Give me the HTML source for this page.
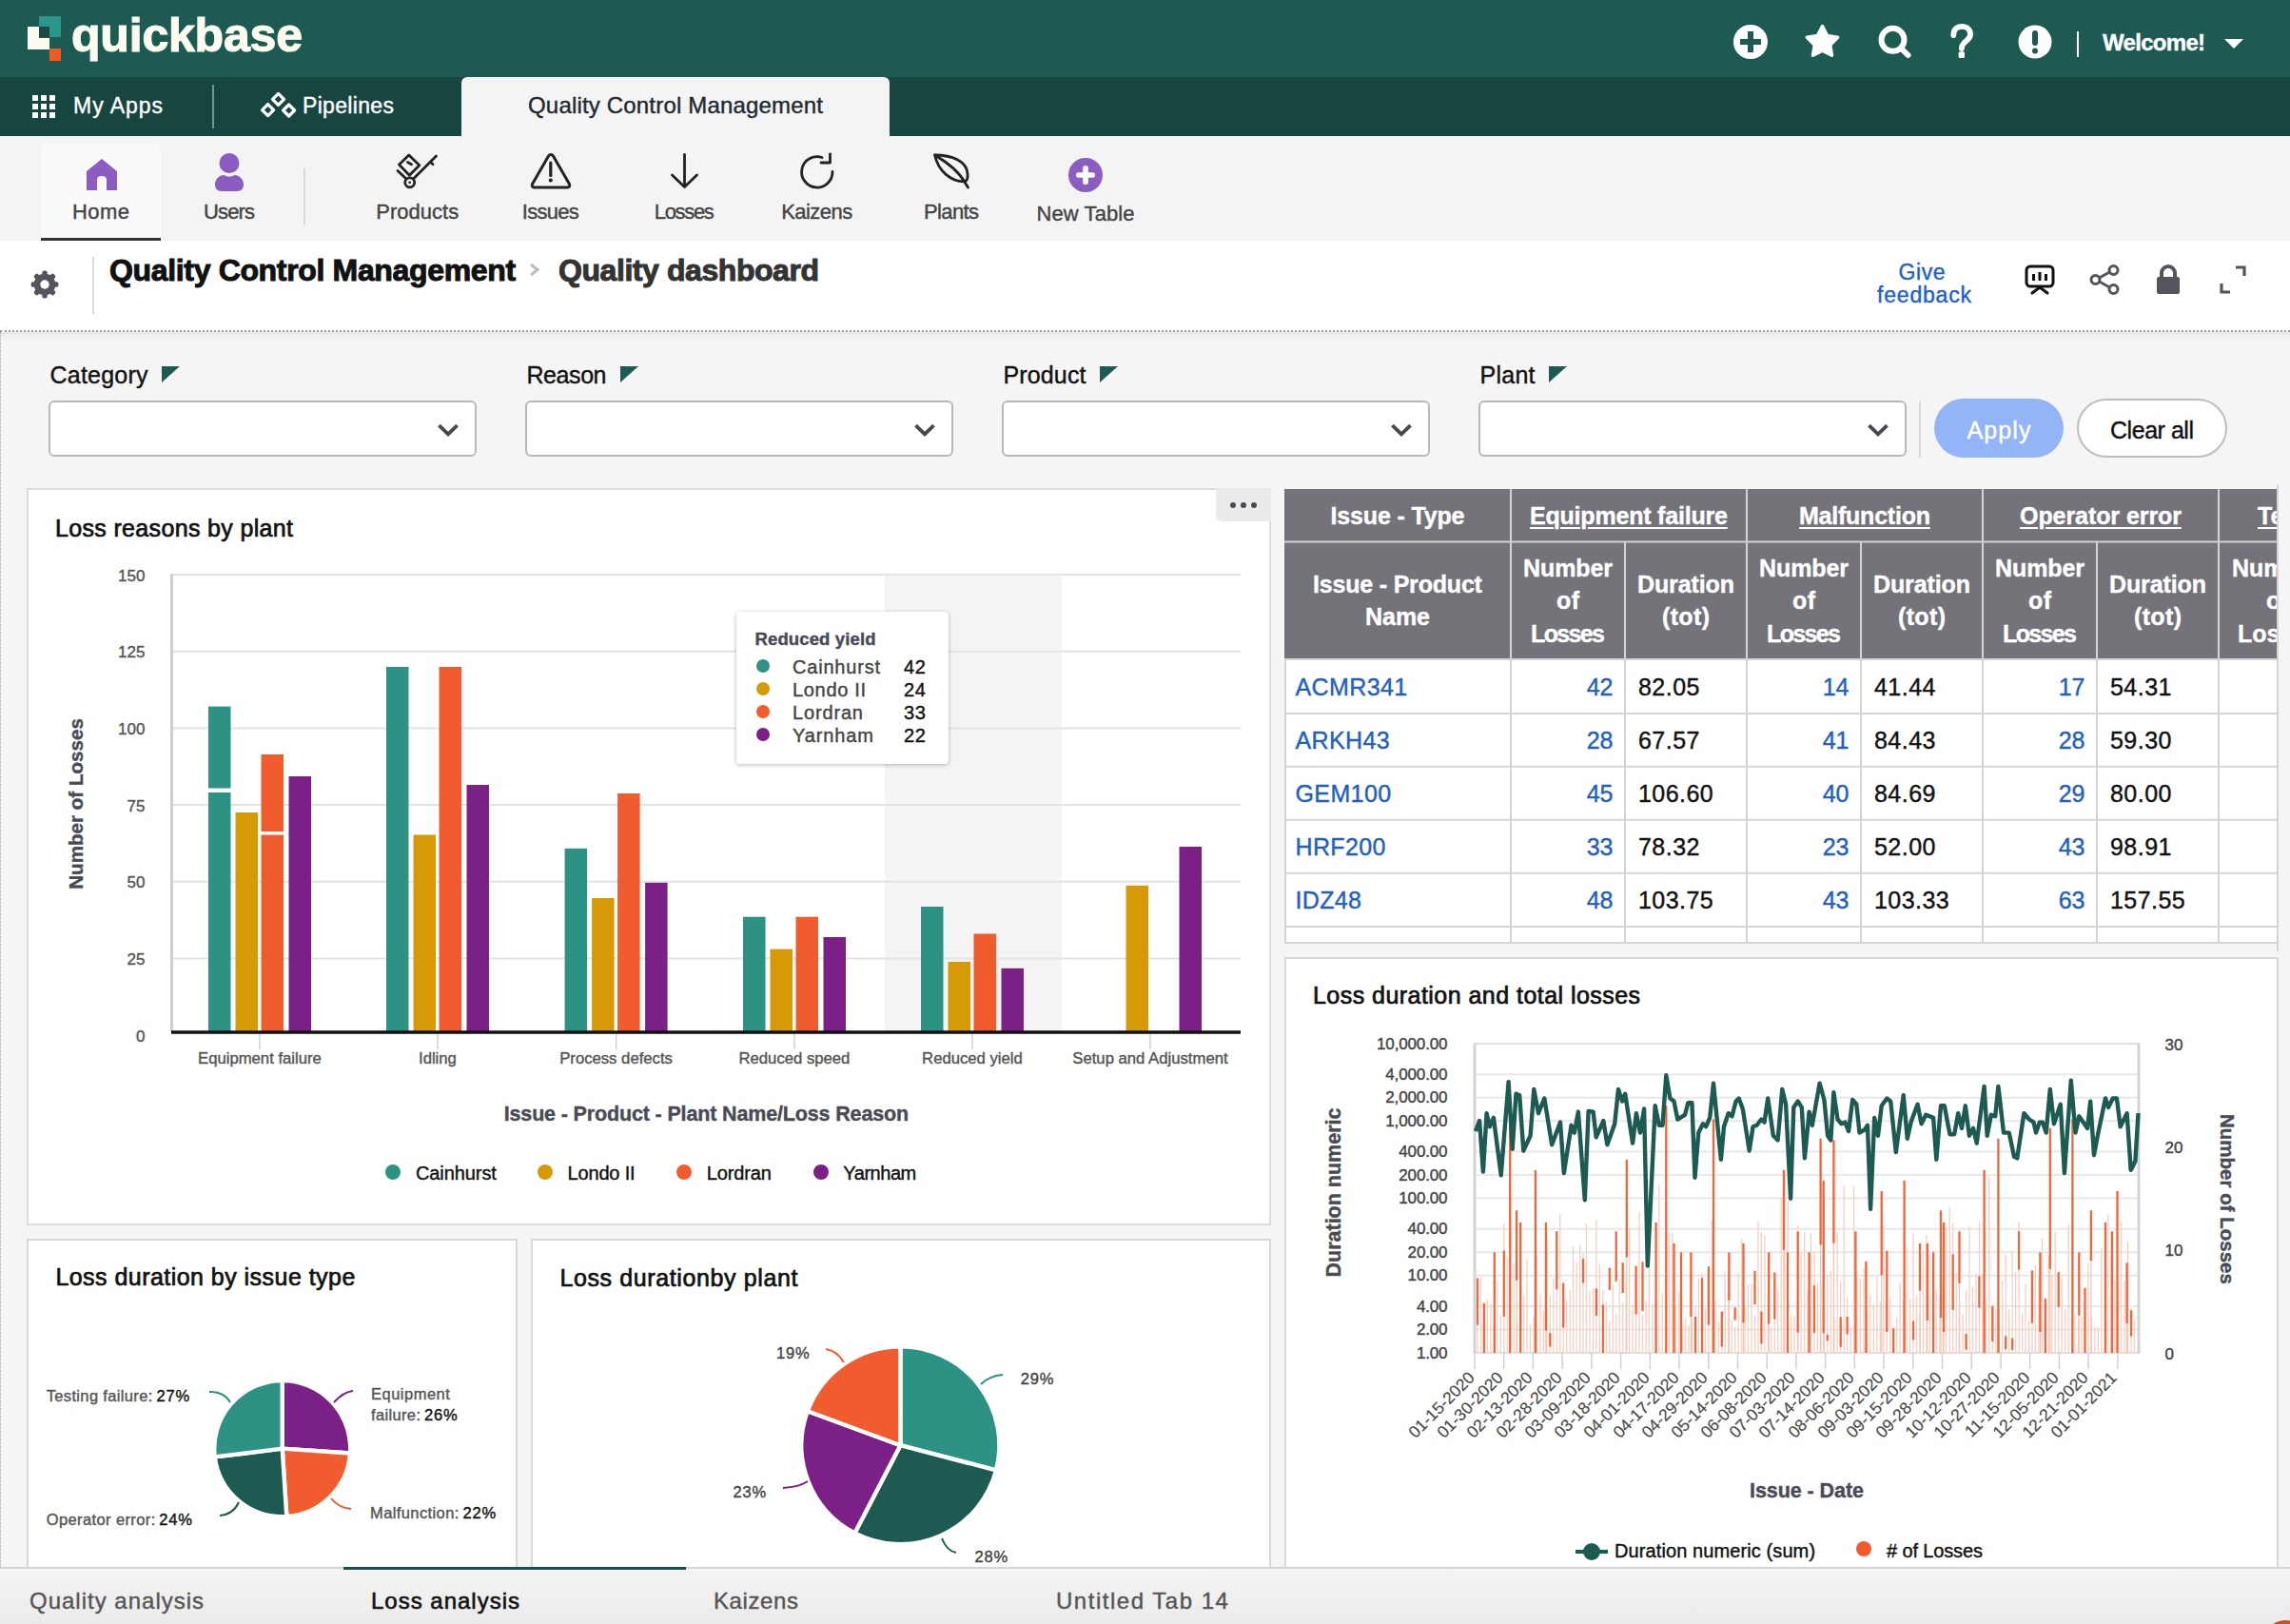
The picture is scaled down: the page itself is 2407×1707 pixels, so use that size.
<!DOCTYPE html>
<html><head><meta charset="utf-8"><title>Quickbase - Quality dashboard</title>
<style>
html,body{margin:0;padding:0;}
body{width:2407px;height:1707px;overflow:hidden;position:relative;background:#f4f4f4;font-family:"Liberation Sans",sans-serif;}
.t{position:absolute;white-space:nowrap;-webkit-text-stroke:0.4px;}
.r{position:absolute;}
svg.r{overflow:visible;}
</style></head><body>
<div class="r" style="left:0px;top:0px;width:2407px;height:81px;background:#1d5a51;"></div>
<div class="r" style="left:41px;top:17px;width:23px;height:22px;background:#2b968a;"></div>
<div class="r" style="left:41px;top:28px;width:11px;height:11px;background:#1b4a44;"></div>
<div class="r" style="left:29px;top:28px;width:12px;height:24px;background:#fbfbf0;"></div>
<div class="r" style="left:29px;top:40px;width:23px;height:12px;background:#fbfbf0;"></div>
<div class="r" style="left:52px;top:51px;width:12px;height:13px;background:#f05a24;"></div>
<div class="t" style="left:75.0px;top:11.7px;font-size:50px;line-height:50px;color:#fbfbf0;font-weight:bold;letter-spacing:-0.20px;-webkit-text-stroke:1.2px;">quickbase</div>
<svg class="r" style="left:1820px;top:24px" width="40" height="40" viewBox="0 0 40 40"><circle cx="20" cy="20" r="18" fill="#fff"/><rect x="17" y="9" width="6" height="22" fill="#1d5a51"/><rect x="9" y="17" width="22" height="6" fill="#1d5a51"/></svg>
<svg class="r" style="left:0;top:0" width="2407" height="81" viewBox="0 0 2407 81"><polygon points="1915.50,27.50 1920.55,37.54 1931.67,39.25 1923.68,47.16 1925.49,58.25 1915.50,53.10 1905.51,58.25 1907.32,47.16 1899.33,39.25 1910.45,37.54" fill="#fff" stroke="#fff" stroke-width="3.5" stroke-linejoin="round"/><circle cx="1989.5" cy="41.8" r="12" fill="none" stroke="#fff" stroke-width="6"/><path d="M1998.5 51 L2005.5 58" stroke="#fff" stroke-width="6" stroke-linecap="round"/><path d="M2053.3 37 C2053.3 31 2057 27.8 2062 27.8 C2067.5 27.8 2071 31.5 2071 36 C2071 41 2067 42.5 2064.5 45 C2063 46.5 2062 47.5 2061.8 51" fill="none" stroke="#fff" stroke-width="5.8" stroke-linecap="round"/><rect x="2058.6" y="54.3" width="6.4" height="6.8" rx="1.5" fill="#fff"/></svg>
<svg class="r" style="left:2120px;top:25px" width="38" height="38" viewBox="0 0 38 38"><circle cx="19" cy="19" r="17.5" fill="#fff"/><rect x="16" y="7" width="6" height="16" rx="3" fill="#1d5a51"/><circle cx="19" cy="28.5" r="3" fill="#1d5a51"/></svg>
<div class="r" style="left:2183px;top:33px;width:2px;height:27px;background:#fff;"></div>
<div class="t" style="left:2210.0px;top:32.7px;font-size:24px;line-height:24px;color:#fff;font-weight:bold;letter-spacing:-0.70px;">Welcome!</div>
<svg class="r" style="left:2337px;top:40px" width="22" height="12" viewBox="0 0 22 12"><path d="M1 1 L21 1 L11 11 Z" fill="#fff"/></svg>
<div class="r" style="left:0px;top:81px;width:2407px;height:62px;background:#17453f;"></div>
<svg class="r" style="left:34px;top:100px" width="24" height="24" viewBox="0 0 24 24"><rect x="0" y="0" width="6" height="6" fill="#fff"/><rect x="9" y="0" width="6" height="6" fill="#fff"/><rect x="18" y="0" width="6" height="6" fill="#fff"/><rect x="0" y="9" width="6" height="6" fill="#fff"/><rect x="9" y="9" width="6" height="6" fill="#fff"/><rect x="18" y="9" width="6" height="6" fill="#fff"/><rect x="0" y="18" width="6" height="6" fill="#fff"/><rect x="9" y="18" width="6" height="6" fill="#fff"/><rect x="18" y="18" width="6" height="6" fill="#fff"/></svg>
<div class="t" style="left:77.0px;top:99.5px;font-size:23px;line-height:23px;color:#fff;letter-spacing:0.97px;">My Apps</div>
<div class="r" style="left:223px;top:89px;width:2px;height:46px;background:#6f9791;"></div>
<svg class="r" style="left:0;top:81px" width="400" height="62" viewBox="0 81 400 62"><g fill="none" stroke="#fff" stroke-width="3.3" stroke-linejoin="round"><path d="M292.5,98.4 L298.5,104.4 L292.5,110.4 L286.5,104.4 Z"/><path d="M281.6,109.6 L287.6,115.6 L281.6,121.6 L275.6,115.6 Z"/><path d="M303.6,110.0 L309.6,116.0 L303.6,122.0 L297.6,116.0 Z"/></g></svg>
<div class="t" style="left:318.0px;top:99.5px;font-size:23px;line-height:23px;color:#fff;letter-spacing:0.33px;">Pipelines</div>
<div class="r" style="left:485px;top:81px;width:450px;height:62px;background:#f4f4f4;border-radius:6px 6px 0 0;"></div>
<div class="t" style="left:555.0px;top:98.7px;font-size:24px;line-height:24px;color:#1f2a30;letter-spacing:0.18px;">Quality Control Management</div>
<div class="r" style="left:0px;top:143px;width:2407px;height:110px;background:#f4f4f4;"></div>
<div class="r" style="left:43px;top:151px;width:126px;height:100px;background:#fafafa;border-radius:8px 8px 0 0;"></div>
<div class="r" style="left:43px;top:250px;width:126px;height:2.5px;background:#333;"></div>
<svg class="r" style="left:89px;top:165px" width="36" height="36" viewBox="0 0 36 36"><path d="M18 2 L34 15 L34 35 L23 35 L23 24 Q23 20 18 20 Q13 20 13 24 L13 35 L2 35 L2 15 Z" fill="#8b5cc2"/></svg>
<svg class="r" style="left:223px;top:160px" width="36" height="42" viewBox="0 0 36 42"><circle cx="18" cy="11.5" r="10.5" fill="#8b5cc2"/><path d="M3 34 C3 27 9 24 12.5 24 Q18 27.5 23.5 24 C27 24 33 27 33 34 Q33 41 26 41 L10 41 Q3 41 3 34 Z" fill="#8b5cc2"/></svg>
<div class="t" style="left:76.0px;top:212.4px;font-size:22px;line-height:22px;color:#444;letter-spacing:0.44px;">Home</div>
<div class="t" style="left:214.0px;top:212.4px;font-size:22px;line-height:22px;color:#444;letter-spacing:-0.86px;">Users</div>
<div class="r" style="left:319px;top:177px;width:2px;height:60px;background:#d8d8d8;"></div>
<svg class="r" style="left:0;top:0" width="1200" height="260" viewBox="0 0 1200 260"><g fill="none" stroke="#222" stroke-width="2.8" stroke-linecap="round" stroke-linejoin="round">
<path d="M429.8,163 L440.8,173.8 L430.3,184.2 L419.5,173 Z"/><path d="M428.5,170.5 L432.5,172.8"/>
<path d="M418,179.5 L426.5,187.5"/><path d="M435,187.5 L458.5,164"/><path d="M452.5,170.3 L455,172.8"/>
<circle cx="430.7" cy="191.8" r="5"/>
<path d="M578.8,162.5 Q577.5,162.5 576.5,164 L559.5,193.5 Q558.5,196.8 561.5,197 L596.5,197 Q599.5,196.8 598.5,193.5 L581.5,164 Q580.5,162.5 578.8,162.5 Z" stroke-width="3"/>
<path d="M578.8,171 L578.8,184.5" stroke-width="3.2"/>
<path d="M719.5,162.5 L719.5,196.5 M706.5,184 L719.5,196.5 L732.5,184"/>
<path d="M875,180.5 A16.2,16.2 0 1 1 864,165.5"/><path d="M872.5,162 L872.5,171 L863,171"/>
<path d="M982.6,163 C1000,163 1016.5,169 1017,183 C1017.3,188 1016,190.5 1013.5,190.8 C1000,191 986,180 982.6,163 Z"/>
<path d="M982.6,163 C996,171 1007,179 1013.5,190.8 L1017.5,197"/>
</g><circle cx="430.7" cy="191.8" r="1.4" fill="#222"/><circle cx="578.8" cy="189.5" r="2.1" fill="#222"/></svg>
<svg class="r" style="left:1122px;top:165px" width="38" height="38" viewBox="0 0 38 38"><circle cx="19" cy="19" r="18" fill="#8b5cc2"/><rect x="16.2" y="9" width="5.6" height="20" rx="2.5" fill="#fff"/><rect x="9" y="16.2" width="20" height="5.6" rx="2.5" fill="#fff"/></svg>
<div class="t" style="left:395.2px;top:212.4px;font-size:22px;line-height:22px;color:#444;letter-spacing:0.03px;">Products</div>
<div class="t" style="left:548.8px;top:212.4px;font-size:22px;line-height:22px;color:#444;letter-spacing:-0.72px;">Issues</div>
<div class="t" style="left:687.8px;top:212.4px;font-size:22px;line-height:22px;color:#444;letter-spacing:-1.34px;">Losses</div>
<div class="t" style="left:821.2px;top:212.4px;font-size:22px;line-height:22px;color:#444;letter-spacing:-0.55px;">Kaizens</div>
<div class="t" style="left:971.0px;top:212.4px;font-size:22px;line-height:22px;color:#444;letter-spacing:-0.63px;">Plants</div>
<div class="t" style="left:1089.5px;top:214.4px;font-size:22px;line-height:22px;color:#444;letter-spacing:0.08px;">New Table</div>
<div class="r" style="left:0px;top:253px;width:2407px;height:94px;background:#fff;"></div>
<div class="r" style="left:0px;top:347px;width:2407px;height:3px;background:transparent;border-top:2px dotted #a0a0a0;"></div>
<svg class="r" style="left:32.4px;top:283.7px" width="30" height="30" viewBox="0 0 30 30"><g fill="#55545c"><circle cx="15" cy="15" r="11.3"/><rect x="12.3" y="0.6" width="5.4" height="7" rx="2" transform="rotate(0 15 15)"/><rect x="12.3" y="0.6" width="5.4" height="7" rx="2" transform="rotate(45 15 15)"/><rect x="12.3" y="0.6" width="5.4" height="7" rx="2" transform="rotate(90 15 15)"/><rect x="12.3" y="0.6" width="5.4" height="7" rx="2" transform="rotate(135 15 15)"/><rect x="12.3" y="0.6" width="5.4" height="7" rx="2" transform="rotate(180 15 15)"/><rect x="12.3" y="0.6" width="5.4" height="7" rx="2" transform="rotate(225 15 15)"/><rect x="12.3" y="0.6" width="5.4" height="7" rx="2" transform="rotate(270 15 15)"/><rect x="12.3" y="0.6" width="5.4" height="7" rx="2" transform="rotate(315 15 15)"/></g><circle cx="15" cy="15" r="4.7" fill="#fff"/></svg>
<div class="r" style="left:97px;top:270px;width:2px;height:60px;background:#dcdcdc;"></div>
<div class="t" style="left:115.0px;top:267.9px;font-size:32px;line-height:32px;color:#111;font-weight:bold;letter-spacing:-0.34px;-webkit-text-stroke:1px;">Quality Control Management</div>
<svg class="r" style="left:555px;top:276px" width="14" height="15" viewBox="0 0 14 15"><path d="M3 2 L10 7.5 L3 13" fill="none" stroke="#bcbcbc" stroke-width="3"/></svg>
<div class="t" style="left:587.0px;top:267.9px;font-size:32px;line-height:32px;color:#333;font-weight:bold;letter-spacing:-0.43px;-webkit-text-stroke:1px;">Quality dashboard</div>
<div class="t" style="left:1995.5px;top:275.0px;font-size:23px;line-height:23px;color:#1b5fd0;letter-spacing:0.57px;">Give</div>
<div class="t" style="left:1973.0px;top:299.0px;font-size:23px;line-height:23px;color:#1b5fd0;letter-spacing:0.81px;">feedback</div>
<svg class="r" style="left:2128px;top:278px" width="32" height="32" viewBox="0 0 32 32"><rect x="2" y="2" width="28" height="21" rx="4" fill="none" stroke="#111" stroke-width="3"/><rect x="8" y="10" width="3" height="7" fill="#111"/><rect x="14.5" y="8" width="3" height="9" fill="#111"/><rect x="21" y="10" width="3" height="7" fill="#111"/><path d="M8 30 L16 24 L24 30" fill="none" stroke="#111" stroke-width="3" stroke-linecap="round"/></svg>
<svg class="r" style="left:2196px;top:278px" width="32" height="32" viewBox="0 0 32 32"><g fill="none" stroke="#55545c" stroke-width="3"><circle cx="6.5" cy="16" r="4.5"/><circle cx="25.5" cy="6" r="4.5"/><circle cx="25.5" cy="26" r="4.5"/><path d="M10.5 14 L21.5 8 M10.5 18 L21.5 24"/></g></svg>
<svg class="r" style="left:2266px;top:278px" width="26" height="32" viewBox="0 0 26 32"><path d="M6 14 L6 9 A7 7 0 0 1 20 9 L20 14" fill="none" stroke="#55545c" stroke-width="4"/><rect x="1" y="13" width="24" height="18" rx="2" fill="#55545c"/></svg>
<svg class="r" style="left:2332px;top:278px" width="30" height="32" viewBox="0 0 30 32"><path d="M18 3 L27 3 L27 12 M3 20 L3 29 L12 29" fill="none" stroke="#55545c" stroke-width="3.2"/></svg>
<div class="r" style="left:0px;top:349px;width:2407px;height:1298px;background:#f5f5f5;box-shadow: inset 0 7px 7px -5px rgba(0,0,0,0.09);"></div>
<div class="r" style="left:0px;top:349px;width:3px;height:1358px;background:transparent;border-left:1.5px dotted #a8a8a8;"></div>
<div class="t" style="left:52.5px;top:381.8px;font-size:25px;line-height:25px;color:#111;letter-spacing:0.22px;">Category</div>
<svg class="r" style="left:170px;top:385px" width="19" height="17" viewBox="0 0 19 17"><path d="M0 0 L19 0 L0 17 Z" fill="#1d5a51"/></svg>
<div class="r" style="left:51px;top:421px;width:446px;height:55px;background:#fff;border:2px solid #b8b8b8;border-radius:6px;box-sizing:content-box;"></div>
<svg class="r" style="left:458.5px;top:444px" width="24" height="16" viewBox="0 0 24 16"><path d="M2.5 3.2 L12 12.3 L21.5 3.2" fill="none" stroke="#48474f" stroke-width="3.8"/></svg>
<div class="t" style="left:553.5px;top:381.8px;font-size:25px;line-height:25px;color:#111;letter-spacing:-0.43px;">Reason</div>
<svg class="r" style="left:652px;top:385px" width="19" height="17" viewBox="0 0 19 17"><path d="M0 0 L19 0 L0 17 Z" fill="#1d5a51"/></svg>
<div class="r" style="left:552px;top:421px;width:446px;height:55px;background:#fff;border:2px solid #b8b8b8;border-radius:6px;box-sizing:content-box;"></div>
<svg class="r" style="left:959.5px;top:444px" width="24" height="16" viewBox="0 0 24 16"><path d="M2.5 3.2 L12 12.3 L21.5 3.2" fill="none" stroke="#48474f" stroke-width="3.8"/></svg>
<div class="t" style="left:1054.5px;top:381.8px;font-size:25px;line-height:25px;color:#111;letter-spacing:0.14px;">Product</div>
<svg class="r" style="left:1156px;top:385px" width="19" height="17" viewBox="0 0 19 17"><path d="M0 0 L19 0 L0 17 Z" fill="#1d5a51"/></svg>
<div class="r" style="left:1053px;top:421px;width:446px;height:55px;background:#fff;border:2px solid #b8b8b8;border-radius:6px;box-sizing:content-box;"></div>
<svg class="r" style="left:1460.5px;top:444px" width="24" height="16" viewBox="0 0 24 16"><path d="M2.5 3.2 L12 12.3 L21.5 3.2" fill="none" stroke="#48474f" stroke-width="3.8"/></svg>
<div class="t" style="left:1555.5px;top:381.8px;font-size:25px;line-height:25px;color:#111;letter-spacing:0.25px;">Plant</div>
<svg class="r" style="left:1628px;top:385px" width="19" height="17" viewBox="0 0 19 17"><path d="M0 0 L19 0 L0 17 Z" fill="#1d5a51"/></svg>
<div class="r" style="left:1554px;top:421px;width:446px;height:55px;background:#fff;border:2px solid #b8b8b8;border-radius:6px;box-sizing:content-box;"></div>
<svg class="r" style="left:1961.5px;top:444px" width="24" height="16" viewBox="0 0 24 16"><path d="M2.5 3.2 L12 12.3 L21.5 3.2" fill="none" stroke="#48474f" stroke-width="3.8"/></svg>
<div class="r" style="left:2017px;top:422px;width:2px;height:59px;background:#d8d8d8;"></div>
<div class="r" style="left:2033px;top:419px;width:136px;height:62px;background:#93b5f7;border-radius:31px;"></div>
<div class="t" style="left:2067.5px;top:439.8px;font-size:25px;line-height:25px;color:#fff;letter-spacing:1.12px;">Apply</div>
<div class="r" style="left:2183px;top:419px;width:154px;height:58px;background:#fff;border:2px solid #bdbdbd;border-radius:31px;box-sizing:content-box;"></div>
<div class="t" style="left:2218.0px;top:439.8px;font-size:25px;line-height:25px;color:#111;letter-spacing:-0.46px;">Clear all</div>
<div class="r" style="left:0px;top:1647px;width:2407px;height:60px;background:linear-gradient(#f4f4f4,#ebebeb);border-top:2px solid #d4d4d4;box-sizing:border-box;"></div>
<div class="r" style="left:361px;top:1647px;width:360px;height:2.5px;background:#1d4e48;"></div>
<div class="t" style="left:31.0px;top:1670.7px;font-size:24px;line-height:24px;color:#555;letter-spacing:1.00px;">Quality analysis</div>
<div class="t" style="left:390.0px;top:1670.7px;font-size:24px;line-height:24px;color:#111;letter-spacing:0.99px;-webkit-text-stroke:0.6px #111;">Loss analysis</div>
<div class="t" style="left:750.0px;top:1670.7px;font-size:24px;line-height:24px;color:#555;letter-spacing:0.60px;">Kaizens</div>
<div class="t" style="left:1110.0px;top:1670.7px;font-size:24px;line-height:24px;color:#555;letter-spacing:1.52px;">Untitled Tab 14</div>
<div class="r" style="left:2380px;top:1703px;width:44px;height:44px;border-radius:22px;background:#cf4f1a;"></div>
<div class="r" style="left:28px;top:513px;width:1308px;height:775px;background:#fff;border:2px solid #dcdcdc;box-sizing:border-box;"></div>
<div class="r" style="left:1277.5px;top:513px;width:58.5px;height:35px;background:#ebebeb;border-radius:0 0 0 6px;"></div>
<div class="r" style="left:1292.9px;top:527.8px;width:6.2px;height:6.2px;border-radius:4px;background:#4a4a52"></div>
<div class="r" style="left:1303.9px;top:527.8px;width:6.2px;height:6.2px;border-radius:4px;background:#4a4a52"></div>
<div class="r" style="left:1314.9px;top:527.8px;width:6.2px;height:6.2px;border-radius:4px;background:#4a4a52"></div>
<div class="t" style="left:58.0px;top:543.3px;font-size:25px;line-height:25px;color:#111;letter-spacing:0.34px;-webkit-text-stroke:0.7px;">Loss reasons by plant</div>
<svg class="r" style="left:0;top:0" width="1400" height="1300" viewBox="0 0 1400 1300"><rect x="930" y="605" width="186" height="479" fill="#f4f4f4"/><line x1="182" y1="1007.5" x2="1304" y2="1007.5" stroke="#e3e3e3" stroke-width="2"/><line x1="182" y1="926.8" x2="1304" y2="926.8" stroke="#e3e3e3" stroke-width="2"/><line x1="182" y1="846.1" x2="1304" y2="846.1" stroke="#e3e3e3" stroke-width="2"/><line x1="182" y1="765.4" x2="1304" y2="765.4" stroke="#e3e3e3" stroke-width="2"/><line x1="182" y1="684.7" x2="1304" y2="684.7" stroke="#e3e3e3" stroke-width="2"/><line x1="182" y1="604.0" x2="1304" y2="604.0" stroke="#e3e3e3" stroke-width="2"/><line x1="180.5" y1="603" x2="180.5" y2="1085" stroke="#cfcfcf" stroke-width="3"/><rect x="219.0" y="742.6" width="23.5" height="342.4" fill="#2c9283"/><rect x="247.5" y="854.0" width="23.5" height="231.0" fill="#d69a06"/><rect x="274.5" y="793.0" width="23.5" height="292.0" fill="#f15c2e"/><rect x="303.5" y="816.0" width="23.5" height="269.0" fill="#7a2087"/><rect x="406.0" y="701.0" width="23.5" height="384.0" fill="#2c9283"/><rect x="434.5" y="877.5" width="23.5" height="207.5" fill="#d69a06"/><rect x="461.5" y="701.0" width="23.5" height="384.0" fill="#f15c2e"/><rect x="490.5" y="825.0" width="23.5" height="260.0" fill="#7a2087"/><rect x="593.6" y="891.8" width="23.5" height="193.2" fill="#2c9283"/><rect x="622.1" y="944.0" width="23.5" height="141.0" fill="#d69a06"/><rect x="649.1" y="834.0" width="23.5" height="251.0" fill="#f15c2e"/><rect x="678.1" y="927.8" width="23.5" height="157.2" fill="#7a2087"/><rect x="781.0" y="963.7" width="23.5" height="121.3" fill="#2c9283"/><rect x="809.5" y="997.6" width="23.5" height="87.4" fill="#d69a06"/><rect x="836.5" y="963.7" width="23.5" height="121.3" fill="#f15c2e"/><rect x="865.5" y="985.0" width="23.5" height="100.0" fill="#7a2087"/><rect x="968.0" y="953.0" width="23.5" height="132.0" fill="#2c9283"/><rect x="996.5" y="1011.0" width="23.5" height="74.0" fill="#d69a06"/><rect x="1023.5" y="981.5" width="23.5" height="103.5" fill="#f15c2e"/><rect x="1052.5" y="1017.8" width="23.5" height="67.2" fill="#7a2087"/><rect x="1183.5" y="930.8" width="23.5" height="154.2" fill="#d69a06"/><rect x="1239.5" y="890.0" width="23.5" height="195.0" fill="#7a2087"/><rect x="218" y="828.5" width="26" height="4.5" fill="#fff"/><rect x="273.5" y="874" width="26" height="3.5" fill="#fff"/><line x1="180" y1="1085" x2="1304" y2="1085" stroke="#111" stroke-width="3.6"/><line x1="273" y1="1087" x2="273" y2="1103" stroke="#ccd0dd" stroke-width="1.5"/><line x1="460" y1="1087" x2="460" y2="1103" stroke="#ccd0dd" stroke-width="1.5"/><line x1="647.6" y1="1087" x2="647.6" y2="1103" stroke="#ccd0dd" stroke-width="1.5"/><line x1="835" y1="1087" x2="835" y2="1103" stroke="#ccd0dd" stroke-width="1.5"/><line x1="1022" y1="1087" x2="1022" y2="1103" stroke="#ccd0dd" stroke-width="1.5"/><line x1="1209" y1="1087" x2="1209" y2="1103" stroke="#ccd0dd" stroke-width="1.5"/></svg>
<div class="t" style="left:143.0px;top:1080.8px;font-size:17px;line-height:17px;color:#555;">0</div>
<div class="t" style="left:133.6px;top:1000.1px;font-size:17px;line-height:17px;color:#555;">25</div>
<div class="t" style="left:133.6px;top:919.4px;font-size:17px;line-height:17px;color:#555;">50</div>
<div class="t" style="left:133.6px;top:838.7px;font-size:17px;line-height:17px;color:#555;">75</div>
<div class="t" style="left:124.1px;top:758.0px;font-size:17px;line-height:17px;color:#555;">100</div>
<div class="t" style="left:124.1px;top:677.3px;font-size:17px;line-height:17px;color:#555;">125</div>
<div class="t" style="left:124.1px;top:596.6px;font-size:17px;line-height:17px;color:#555;">150</div>
<div class="t" style="left:208.0px;top:1104.9px;font-size:16.7px;line-height:16.7px;color:#555;">Equipment failure</div>
<div class="t" style="left:440.0px;top:1104.9px;font-size:16.7px;line-height:16.7px;color:#555;">Idling</div>
<div class="t" style="left:588.2px;top:1104.9px;font-size:16.7px;line-height:16.7px;color:#555;">Process defects</div>
<div class="t" style="left:776.5px;top:1104.9px;font-size:16.7px;line-height:16.7px;color:#555;">Reduced speed</div>
<div class="t" style="left:969.1px;top:1104.9px;font-size:16.7px;line-height:16.7px;color:#555;">Reduced yield</div>
<div class="t" style="left:1127.3px;top:1104.9px;font-size:16.7px;line-height:16.7px;color:#555;">Setup and Adjustment</div>
<div class="t" style="left:529.7px;top:1161.1px;font-size:21.5px;line-height:21.5px;color:#4a4a55;font-weight:bold;letter-spacing:-0.15px;">Issue - Product - Plant Name/Loss Reason</div>
<div class="t" style="left:-10.1px;top:833.5px;width:179.6px;height:22px;font-size:20.6px;line-height:22px;font-weight:bold;color:#4a4a55;text-align:center;transform:rotate(-90deg);transform-origin:50% 50%;">Number of Losses</div>
<div class="r" style="left:404.5px;top:1224px;width:16px;height:16px;border-radius:8px;background:#2c9283"></div>
<div class="t" style="left:436.9px;top:1223.1px;font-size:20px;line-height:20px;color:#111;letter-spacing:-0.07px;">Cainhurst</div>
<div class="r" style="left:564.8px;top:1224px;width:16px;height:16px;border-radius:8px;background:#d69a06"></div>
<div class="t" style="left:596.6px;top:1223.1px;font-size:20px;line-height:20px;color:#111;letter-spacing:-0.18px;">Londo II</div>
<div class="r" style="left:711px;top:1224px;width:16px;height:16px;border-radius:8px;background:#f15c2e"></div>
<div class="t" style="left:742.8px;top:1223.1px;font-size:20px;line-height:20px;color:#111;letter-spacing:-0.16px;">Lordran</div>
<div class="r" style="left:854.5px;top:1224px;width:16px;height:16px;border-radius:8px;background:#7a2087"></div>
<div class="t" style="left:886.3px;top:1223.1px;font-size:20px;line-height:20px;color:#111;letter-spacing:-0.45px;">Yarnham</div>
<div class="r" style="left:774px;top:643px;width:223px;height:160px;background:#fff;border-radius:4px;box-shadow:0 1px 4px rgba(0,0,0,0.28);"></div>
<div class="t" style="left:793.5px;top:663.3px;font-size:18.5px;line-height:18.5px;color:#4a4a55;font-weight:bold;letter-spacing:0.13px;">Reduced yield</div>
<div class="r" style="left:795px;top:693px;width:14px;height:14px;border-radius:7px;background:#2c9283"></div>
<div class="t" style="left:833.0px;top:690.6px;font-size:20px;line-height:20px;color:#444;letter-spacing:0.80px;">Cainhurst</div>
<div class="t" style="left:950.0px;top:690.6px;font-size:20px;line-height:20px;color:#111;letter-spacing:0.75px;">42</div>
<div class="r" style="left:795px;top:717px;width:14px;height:14px;border-radius:7px;background:#d69a06"></div>
<div class="t" style="left:833.0px;top:714.6px;font-size:20px;line-height:20px;color:#444;letter-spacing:0.67px;">Londo II</div>
<div class="t" style="left:950.0px;top:714.6px;font-size:20px;line-height:20px;color:#111;letter-spacing:0.75px;">24</div>
<div class="r" style="left:795px;top:741px;width:14px;height:14px;border-radius:7px;background:#f15c2e"></div>
<div class="t" style="left:833.0px;top:738.6px;font-size:20px;line-height:20px;color:#444;letter-spacing:0.84px;">Lordran</div>
<div class="t" style="left:950.0px;top:738.6px;font-size:20px;line-height:20px;color:#111;letter-spacing:0.75px;">33</div>
<div class="r" style="left:795px;top:765px;width:14px;height:14px;border-radius:7px;background:#7a2087"></div>
<div class="t" style="left:833.0px;top:762.6px;font-size:20px;line-height:20px;color:#444;letter-spacing:0.89px;">Yarnham</div>
<div class="t" style="left:950.0px;top:762.6px;font-size:20px;line-height:20px;color:#111;letter-spacing:0.75px;">22</div>
<div class="r" style="left:1350px;top:514px;width:1045px;height:478px;background:#fff;border:2px solid #d4d4d4;box-sizing:border-box;"></div>
<div class="r" style="left:1350px;top:514px;width:1043px;height:179px;background:#74737a;"></div>
<svg class="r" style="left:0;top:0" width="2407" height="1000" viewBox="0 0 2407 1000"><line x1="1350" y1="569.5" x2="2393" y2="569.5" stroke="#d2d2d8" stroke-width="2"/><line x1="1588" y1="514" x2="1588" y2="992" stroke="#d2d2d8" stroke-width="2"/><line x1="1836" y1="514" x2="1836" y2="992" stroke="#d2d2d8" stroke-width="2"/><line x1="2084" y1="514" x2="2084" y2="992" stroke="#d2d2d8" stroke-width="2"/><line x1="2332" y1="514" x2="2332" y2="992" stroke="#d2d2d8" stroke-width="2"/><line x1="1708" y1="569" x2="1708" y2="992" stroke="#d2d2d8" stroke-width="2"/><line x1="1956" y1="569" x2="1956" y2="992" stroke="#d2d2d8" stroke-width="2"/><line x1="2204" y1="569" x2="2204" y2="992" stroke="#d2d2d8" stroke-width="2"/><line x1="1350" y1="750" x2="2393" y2="750" stroke="#d4d4d4" stroke-width="2"/><line x1="1350" y1="805.7" x2="2393" y2="805.7" stroke="#d4d4d4" stroke-width="2"/><line x1="1350" y1="861.8" x2="2393" y2="861.8" stroke="#d4d4d4" stroke-width="2"/><line x1="1350" y1="917.8" x2="2393" y2="917.8" stroke="#d4d4d4" stroke-width="2"/><line x1="1350" y1="974" x2="2393" y2="974" stroke="#d4d4d4" stroke-width="2"/><line x1="1350" y1="693" x2="2393" y2="693" stroke="#d4d4d4" stroke-width="2"/></svg>
<div class="t" style="left:1398.5px;top:529.8px;font-size:25px;line-height:25px;color:#fff;font-weight:bold;letter-spacing:-0.15px;">Issue - Type</div>
<div class="t" style="left:1608.0px;top:529.8px;font-size:25px;line-height:25px;color:#fff;font-weight:bold;letter-spacing:-0.20px;text-decoration:underline;text-underline-offset:3px;text-decoration-thickness:2px;">Equipment failure</div>
<div class="t" style="left:1891.0px;top:529.8px;font-size:25px;line-height:25px;color:#fff;font-weight:bold;letter-spacing:-0.23px;text-decoration:underline;text-underline-offset:3px;text-decoration-thickness:2px;">Malfunction</div>
<div class="t" style="left:2123.0px;top:529.8px;font-size:25px;line-height:25px;color:#fff;font-weight:bold;letter-spacing:-0.07px;text-decoration:underline;text-underline-offset:3px;text-decoration-thickness:2px;">Operator error</div>
<div class="t" style="left:2373.0px;top:529.8px;font-size:25px;line-height:25px;color:#fff;font-weight:bold;text-decoration:underline;text-underline-offset:3px;text-decoration-thickness:2px;">Testing</div>
<div class="t" style="left:1380.0px;top:601.8px;font-size:25px;line-height:25px;color:#fff;font-weight:bold;letter-spacing:-0.19px;">Issue - Product</div>
<div class="t" style="left:1435.0px;top:635.8px;font-size:25px;line-height:25px;color:#fff;font-weight:bold;letter-spacing:-0.03px;">Name</div>
<div class="t" style="left:1601.0px;top:584.8px;font-size:25px;line-height:25px;color:#fff;font-weight:bold;letter-spacing:-0.09px;">Number</div>
<div class="t" style="left:1636.0px;top:618.8px;font-size:25px;line-height:25px;color:#fff;font-weight:bold;letter-spacing:0.40px;">of</div>
<div class="t" style="left:1609.0px;top:653.8px;font-size:25px;line-height:25px;color:#fff;font-weight:bold;letter-spacing:-1.63px;">Losses</div>
<div class="t" style="left:1849.0px;top:584.8px;font-size:25px;line-height:25px;color:#fff;font-weight:bold;letter-spacing:-0.09px;">Number</div>
<div class="t" style="left:1884.0px;top:618.8px;font-size:25px;line-height:25px;color:#fff;font-weight:bold;letter-spacing:0.40px;">of</div>
<div class="t" style="left:1857.0px;top:653.8px;font-size:25px;line-height:25px;color:#fff;font-weight:bold;letter-spacing:-1.63px;">Losses</div>
<div class="t" style="left:2097.0px;top:584.8px;font-size:25px;line-height:25px;color:#fff;font-weight:bold;letter-spacing:-0.09px;">Number</div>
<div class="t" style="left:2132.0px;top:618.8px;font-size:25px;line-height:25px;color:#fff;font-weight:bold;letter-spacing:0.40px;">of</div>
<div class="t" style="left:2105.0px;top:653.8px;font-size:25px;line-height:25px;color:#fff;font-weight:bold;letter-spacing:-1.63px;">Losses</div>
<div class="t" style="left:1721.0px;top:601.8px;font-size:25px;line-height:25px;color:#fff;font-weight:bold;letter-spacing:-0.11px;">Duration</div>
<div class="t" style="left:1747.0px;top:635.8px;font-size:25px;line-height:25px;color:#fff;font-weight:bold;letter-spacing:0.36px;">(tot)</div>
<div class="t" style="left:1969.0px;top:601.8px;font-size:25px;line-height:25px;color:#fff;font-weight:bold;letter-spacing:-0.11px;">Duration</div>
<div class="t" style="left:1995.0px;top:635.8px;font-size:25px;line-height:25px;color:#fff;font-weight:bold;letter-spacing:0.36px;">(tot)</div>
<div class="t" style="left:2217.0px;top:601.8px;font-size:25px;line-height:25px;color:#fff;font-weight:bold;letter-spacing:-0.11px;">Duration</div>
<div class="t" style="left:2243.0px;top:635.8px;font-size:25px;line-height:25px;color:#fff;font-weight:bold;letter-spacing:0.36px;">(tot)</div>
<div class="t" style="left:2346.0px;top:584.8px;font-size:25px;line-height:25px;color:#fff;font-weight:bold;">Number</div>
<div class="t" style="left:2382.0px;top:618.8px;font-size:25px;line-height:25px;color:#fff;font-weight:bold;">of</div>
<div class="t" style="left:2352.0px;top:653.8px;font-size:25px;line-height:25px;color:#fff;font-weight:bold;">Losses</div>
<div class="t" style="left:1361.5px;top:709.8px;font-size:25px;line-height:25px;color:#2160c0;letter-spacing:0.38px;">ACMR341</div>
<div class="t" style="left:1667.7px;top:709.8px;font-size:25px;line-height:25px;color:#2160c0;">42</div>
<div class="t" style="left:1722.0px;top:709.8px;font-size:25px;line-height:25px;color:#111;letter-spacing:0.47px;">82.05</div>
<div class="t" style="left:1915.7px;top:709.8px;font-size:25px;line-height:25px;color:#2160c0;">14</div>
<div class="t" style="left:1970.0px;top:709.8px;font-size:25px;line-height:25px;color:#111;letter-spacing:0.47px;">41.44</div>
<div class="t" style="left:2163.7px;top:709.8px;font-size:25px;line-height:25px;color:#2160c0;">17</div>
<div class="t" style="left:2218.0px;top:709.8px;font-size:25px;line-height:25px;color:#111;letter-spacing:0.47px;">54.31</div>
<div class="t" style="left:1361.5px;top:765.9px;font-size:25px;line-height:25px;color:#2160c0;letter-spacing:0.39px;">ARKH43</div>
<div class="t" style="left:1667.7px;top:765.9px;font-size:25px;line-height:25px;color:#2160c0;">28</div>
<div class="t" style="left:1722.0px;top:765.9px;font-size:25px;line-height:25px;color:#111;letter-spacing:0.47px;">67.57</div>
<div class="t" style="left:1915.7px;top:765.9px;font-size:25px;line-height:25px;color:#2160c0;">41</div>
<div class="t" style="left:1970.0px;top:765.9px;font-size:25px;line-height:25px;color:#111;letter-spacing:0.47px;">84.43</div>
<div class="t" style="left:2163.7px;top:765.9px;font-size:25px;line-height:25px;color:#2160c0;">28</div>
<div class="t" style="left:2218.0px;top:765.9px;font-size:25px;line-height:25px;color:#111;letter-spacing:0.47px;">59.30</div>
<div class="t" style="left:1361.5px;top:822.0px;font-size:25px;line-height:25px;color:#2160c0;letter-spacing:0.39px;">GEM100</div>
<div class="t" style="left:1667.7px;top:822.0px;font-size:25px;line-height:25px;color:#2160c0;">45</div>
<div class="t" style="left:1722.0px;top:822.0px;font-size:25px;line-height:25px;color:#111;letter-spacing:0.46px;">106.60</div>
<div class="t" style="left:1915.7px;top:822.0px;font-size:25px;line-height:25px;color:#2160c0;">40</div>
<div class="t" style="left:1970.0px;top:822.0px;font-size:25px;line-height:25px;color:#111;letter-spacing:0.47px;">84.69</div>
<div class="t" style="left:2163.7px;top:822.0px;font-size:25px;line-height:25px;color:#2160c0;">29</div>
<div class="t" style="left:2218.0px;top:822.0px;font-size:25px;line-height:25px;color:#111;letter-spacing:0.47px;">80.00</div>
<div class="t" style="left:1361.5px;top:878.1px;font-size:25px;line-height:25px;color:#2160c0;letter-spacing:0.37px;">HRF200</div>
<div class="t" style="left:1667.7px;top:878.1px;font-size:25px;line-height:25px;color:#2160c0;">33</div>
<div class="t" style="left:1722.0px;top:878.1px;font-size:25px;line-height:25px;color:#111;letter-spacing:0.47px;">78.32</div>
<div class="t" style="left:1915.7px;top:878.1px;font-size:25px;line-height:25px;color:#2160c0;">23</div>
<div class="t" style="left:1970.0px;top:878.1px;font-size:25px;line-height:25px;color:#111;letter-spacing:0.47px;">52.00</div>
<div class="t" style="left:2163.7px;top:878.1px;font-size:25px;line-height:25px;color:#2160c0;">43</div>
<div class="t" style="left:2218.0px;top:878.1px;font-size:25px;line-height:25px;color:#111;letter-spacing:0.47px;">98.91</div>
<div class="t" style="left:1361.5px;top:934.2px;font-size:25px;line-height:25px;color:#2160c0;letter-spacing:0.34px;">IDZ48</div>
<div class="t" style="left:1667.7px;top:934.2px;font-size:25px;line-height:25px;color:#2160c0;">48</div>
<div class="t" style="left:1722.0px;top:934.2px;font-size:25px;line-height:25px;color:#111;letter-spacing:0.46px;">103.75</div>
<div class="t" style="left:1915.7px;top:934.2px;font-size:25px;line-height:25px;color:#2160c0;">43</div>
<div class="t" style="left:1970.0px;top:934.2px;font-size:25px;line-height:25px;color:#111;letter-spacing:0.46px;">103.33</div>
<div class="t" style="left:2163.7px;top:934.2px;font-size:25px;line-height:25px;color:#2160c0;">63</div>
<div class="t" style="left:2218.0px;top:934.2px;font-size:25px;line-height:25px;color:#111;letter-spacing:0.46px;">157.55</div>
<div class="r" style="left:2393px;top:510px;width:14px;height:490px;background:#f5f5f5;border-left:2px solid #d4d4d4;box-sizing:border-box;"></div>
<div class="r" style="left:1350px;top:1006px;width:1045px;height:641px;background:#fff;border:2px solid #d8d8d8;border-bottom:none;box-sizing:border-box;"></div>
<div class="t" style="left:1380.0px;top:1034.3px;font-size:25px;line-height:25px;color:#111;letter-spacing:0.46px;-webkit-text-stroke:0.7px;">Loss duration and total losses</div>
<svg class="r" style="left:0;top:0" width="2407" height="1707" viewBox="0 0 2407 1707"><rect x="1550" y="1097" width="698" height="325" fill="#fff" stroke="#e0e0e0" stroke-width="2"/><line x1="1550" y1="1129.3" x2="2248" y2="1129.3" stroke="#e8e8e8" stroke-width="2"/><line x1="1550" y1="1153.8" x2="2248" y2="1153.8" stroke="#e8e8e8" stroke-width="2"/><line x1="1550" y1="1178.2" x2="2248" y2="1178.2" stroke="#e8e8e8" stroke-width="2"/><line x1="1550" y1="1210.6" x2="2248" y2="1210.6" stroke="#e8e8e8" stroke-width="2"/><line x1="1550" y1="1235.0" x2="2248" y2="1235.0" stroke="#e8e8e8" stroke-width="2"/><line x1="1550" y1="1259.5" x2="2248" y2="1259.5" stroke="#e8e8e8" stroke-width="2"/><line x1="1550" y1="1291.8" x2="2248" y2="1291.8" stroke="#e8e8e8" stroke-width="2"/><line x1="1550" y1="1316.3" x2="2248" y2="1316.3" stroke="#e8e8e8" stroke-width="2"/><line x1="1550" y1="1340.8" x2="2248" y2="1340.8" stroke="#e8e8e8" stroke-width="2"/><line x1="1550" y1="1373.1" x2="2248" y2="1373.1" stroke="#e8e8e8" stroke-width="2"/><line x1="1550" y1="1397.5" x2="2248" y2="1397.5" stroke="#e8e8e8" stroke-width="2"/><line x1="1550" y1="1097" x2="1550" y2="1422" stroke="#d4d4d4" stroke-width="3"/><line x1="2248" y1="1097" x2="2248" y2="1422" stroke="#d4d4d4" stroke-width="3"/><line x1="1553.0" y1="1386.9" x2="1553.0" y2="1422" stroke="#f7cdbd" stroke-width="1.2"/><line x1="1556.5" y1="1342.5" x2="1556.5" y2="1422" stroke="#f7cdbd" stroke-width="1.2"/><line x1="1559.9" y1="1374.1" x2="1559.9" y2="1422" stroke="#f7cdbd" stroke-width="1.2"/><line x1="1563.4" y1="1365.7" x2="1563.4" y2="1422" stroke="#f7cdbd" stroke-width="1.2"/><line x1="1566.9" y1="1370.1" x2="1566.9" y2="1422" stroke="#f7cdbd" stroke-width="1.2"/><line x1="1570.3" y1="1390.5" x2="1570.3" y2="1422" stroke="#f7cdbd" stroke-width="1.2"/><line x1="1573.8" y1="1346.7" x2="1573.8" y2="1422" stroke="#f7cdbd" stroke-width="1.2"/><line x1="1577.3" y1="1382.6" x2="1577.3" y2="1422" stroke="#f7cdbd" stroke-width="1.2"/><line x1="1580.8" y1="1285.6" x2="1580.8" y2="1422" stroke="#f7cdbd" stroke-width="1.2"/><line x1="1584.2" y1="1321.4" x2="1584.2" y2="1422" stroke="#f7cdbd" stroke-width="1.2"/><line x1="1587.7" y1="1279.7" x2="1587.7" y2="1422" stroke="#f7cdbd" stroke-width="1.2"/><line x1="1591.2" y1="1328.4" x2="1591.2" y2="1422" stroke="#f7cdbd" stroke-width="1.2"/><line x1="1594.6" y1="1388.9" x2="1594.6" y2="1422" stroke="#f7cdbd" stroke-width="1.2"/><line x1="1598.1" y1="1347.3" x2="1598.1" y2="1422" stroke="#f7cdbd" stroke-width="1.2"/><line x1="1601.6" y1="1361.3" x2="1601.6" y2="1422" stroke="#f7cdbd" stroke-width="1.2"/><line x1="1605.0" y1="1323.0" x2="1605.0" y2="1422" stroke="#f7cdbd" stroke-width="1.2"/><line x1="1608.5" y1="1392.2" x2="1608.5" y2="1422" stroke="#f7cdbd" stroke-width="1.2"/><line x1="1612.0" y1="1383.7" x2="1612.0" y2="1422" stroke="#f7cdbd" stroke-width="1.2"/><line x1="1615.5" y1="1319.4" x2="1615.5" y2="1422" stroke="#f7cdbd" stroke-width="1.2"/><line x1="1618.9" y1="1361.0" x2="1618.9" y2="1422" stroke="#f7cdbd" stroke-width="1.2"/><line x1="1622.4" y1="1378.1" x2="1622.4" y2="1422" stroke="#f7cdbd" stroke-width="1.2"/><line x1="1625.9" y1="1301.8" x2="1625.9" y2="1422" stroke="#f7cdbd" stroke-width="1.2"/><line x1="1629.3" y1="1361.7" x2="1629.3" y2="1422" stroke="#f7cdbd" stroke-width="1.2"/><line x1="1632.8" y1="1343.8" x2="1632.8" y2="1422" stroke="#f7cdbd" stroke-width="1.2"/><line x1="1636.3" y1="1328.5" x2="1636.3" y2="1422" stroke="#f7cdbd" stroke-width="1.2"/><line x1="1639.8" y1="1275.8" x2="1639.8" y2="1422" stroke="#f7cdbd" stroke-width="1.2"/><line x1="1643.2" y1="1350.8" x2="1643.2" y2="1422" stroke="#f7cdbd" stroke-width="1.2"/><line x1="1646.7" y1="1366.8" x2="1646.7" y2="1422" stroke="#f7cdbd" stroke-width="1.2"/><line x1="1650.2" y1="1356.1" x2="1650.2" y2="1422" stroke="#f7cdbd" stroke-width="1.2"/><line x1="1653.6" y1="1310.0" x2="1653.6" y2="1422" stroke="#f7cdbd" stroke-width="1.2"/><line x1="1657.1" y1="1326.8" x2="1657.1" y2="1422" stroke="#f7cdbd" stroke-width="1.2"/><line x1="1660.6" y1="1308.6" x2="1660.6" y2="1422" stroke="#f7cdbd" stroke-width="1.2"/><line x1="1664.0" y1="1317.5" x2="1664.0" y2="1422" stroke="#f7cdbd" stroke-width="1.2"/><line x1="1667.5" y1="1285.8" x2="1667.5" y2="1422" stroke="#f7cdbd" stroke-width="1.2"/><line x1="1671.0" y1="1356.4" x2="1671.0" y2="1422" stroke="#f7cdbd" stroke-width="1.2"/><line x1="1674.5" y1="1354.1" x2="1674.5" y2="1422" stroke="#f7cdbd" stroke-width="1.2"/><line x1="1677.9" y1="1282.7" x2="1677.9" y2="1422" stroke="#f7cdbd" stroke-width="1.2"/><line x1="1681.4" y1="1328.7" x2="1681.4" y2="1422" stroke="#f7cdbd" stroke-width="1.2"/><line x1="1684.9" y1="1356.1" x2="1684.9" y2="1422" stroke="#f7cdbd" stroke-width="1.2"/><line x1="1688.3" y1="1368.4" x2="1688.3" y2="1422" stroke="#f7cdbd" stroke-width="1.2"/><line x1="1691.8" y1="1389.0" x2="1691.8" y2="1422" stroke="#f7cdbd" stroke-width="1.2"/><line x1="1695.3" y1="1350.2" x2="1695.3" y2="1422" stroke="#f7cdbd" stroke-width="1.2"/><line x1="1698.7" y1="1381.2" x2="1698.7" y2="1422" stroke="#f7cdbd" stroke-width="1.2"/><line x1="1702.2" y1="1344.0" x2="1702.2" y2="1422" stroke="#f7cdbd" stroke-width="1.2"/><line x1="1705.7" y1="1369.2" x2="1705.7" y2="1422" stroke="#f7cdbd" stroke-width="1.2"/><line x1="1709.2" y1="1343.3" x2="1709.2" y2="1422" stroke="#f7cdbd" stroke-width="1.2"/><line x1="1712.6" y1="1291.0" x2="1712.6" y2="1422" stroke="#f7cdbd" stroke-width="1.2"/><line x1="1716.1" y1="1371.2" x2="1716.1" y2="1422" stroke="#f7cdbd" stroke-width="1.2"/><line x1="1719.6" y1="1343.3" x2="1719.6" y2="1422" stroke="#f7cdbd" stroke-width="1.2"/><line x1="1723.0" y1="1274.0" x2="1723.0" y2="1422" stroke="#f7cdbd" stroke-width="1.2"/><line x1="1726.5" y1="1382.1" x2="1726.5" y2="1422" stroke="#f7cdbd" stroke-width="1.2"/><line x1="1730.0" y1="1367.0" x2="1730.0" y2="1422" stroke="#f7cdbd" stroke-width="1.2"/><line x1="1733.4" y1="1330.1" x2="1733.4" y2="1422" stroke="#f7cdbd" stroke-width="1.2"/><line x1="1736.9" y1="1371.0" x2="1736.9" y2="1422" stroke="#f7cdbd" stroke-width="1.2"/><line x1="1740.4" y1="1362.2" x2="1740.4" y2="1422" stroke="#f7cdbd" stroke-width="1.2"/><line x1="1743.8" y1="1244.8" x2="1743.8" y2="1422" stroke="#f7cdbd" stroke-width="1.2"/><line x1="1747.3" y1="1359.1" x2="1747.3" y2="1422" stroke="#f7cdbd" stroke-width="1.2"/><line x1="1750.8" y1="1343.7" x2="1750.8" y2="1422" stroke="#f7cdbd" stroke-width="1.2"/><line x1="1754.3" y1="1296.5" x2="1754.3" y2="1422" stroke="#f7cdbd" stroke-width="1.2"/><line x1="1757.7" y1="1295.3" x2="1757.7" y2="1422" stroke="#f7cdbd" stroke-width="1.2"/><line x1="1761.2" y1="1372.2" x2="1761.2" y2="1422" stroke="#f7cdbd" stroke-width="1.2"/><line x1="1764.7" y1="1358.1" x2="1764.7" y2="1422" stroke="#f7cdbd" stroke-width="1.2"/><line x1="1768.1" y1="1391.9" x2="1768.1" y2="1422" stroke="#f7cdbd" stroke-width="1.2"/><line x1="1771.6" y1="1386.3" x2="1771.6" y2="1422" stroke="#f7cdbd" stroke-width="1.2"/><line x1="1775.1" y1="1392.8" x2="1775.1" y2="1422" stroke="#f7cdbd" stroke-width="1.2"/><line x1="1778.5" y1="1386.9" x2="1778.5" y2="1422" stroke="#f7cdbd" stroke-width="1.2"/><line x1="1782.0" y1="1374.3" x2="1782.0" y2="1422" stroke="#f7cdbd" stroke-width="1.2"/><line x1="1785.5" y1="1343.8" x2="1785.5" y2="1422" stroke="#f7cdbd" stroke-width="1.2"/><line x1="1789.0" y1="1337.5" x2="1789.0" y2="1422" stroke="#f7cdbd" stroke-width="1.2"/><line x1="1792.4" y1="1375.2" x2="1792.4" y2="1422" stroke="#f7cdbd" stroke-width="1.2"/><line x1="1795.9" y1="1388.6" x2="1795.9" y2="1422" stroke="#f7cdbd" stroke-width="1.2"/><line x1="1799.4" y1="1282.7" x2="1799.4" y2="1422" stroke="#f7cdbd" stroke-width="1.2"/><line x1="1802.8" y1="1367.1" x2="1802.8" y2="1422" stroke="#f7cdbd" stroke-width="1.2"/><line x1="1806.3" y1="1389.8" x2="1806.3" y2="1422" stroke="#f7cdbd" stroke-width="1.2"/><line x1="1809.8" y1="1380.2" x2="1809.8" y2="1422" stroke="#f7cdbd" stroke-width="1.2"/><line x1="1813.2" y1="1336.7" x2="1813.2" y2="1422" stroke="#f7cdbd" stroke-width="1.2"/><line x1="1816.7" y1="1339.3" x2="1816.7" y2="1422" stroke="#f7cdbd" stroke-width="1.2"/><line x1="1820.2" y1="1387.2" x2="1820.2" y2="1422" stroke="#f7cdbd" stroke-width="1.2"/><line x1="1823.7" y1="1394.3" x2="1823.7" y2="1422" stroke="#f7cdbd" stroke-width="1.2"/><line x1="1827.1" y1="1337.6" x2="1827.1" y2="1422" stroke="#f7cdbd" stroke-width="1.2"/><line x1="1830.6" y1="1302.0" x2="1830.6" y2="1422" stroke="#f7cdbd" stroke-width="1.2"/><line x1="1834.1" y1="1374.1" x2="1834.1" y2="1422" stroke="#f7cdbd" stroke-width="1.2"/><line x1="1837.5" y1="1349.9" x2="1837.5" y2="1422" stroke="#f7cdbd" stroke-width="1.2"/><line x1="1841.0" y1="1349.5" x2="1841.0" y2="1422" stroke="#f7cdbd" stroke-width="1.2"/><line x1="1844.5" y1="1382.6" x2="1844.5" y2="1422" stroke="#f7cdbd" stroke-width="1.2"/><line x1="1848.0" y1="1283.2" x2="1848.0" y2="1422" stroke="#f7cdbd" stroke-width="1.2"/><line x1="1851.4" y1="1294.8" x2="1851.4" y2="1422" stroke="#f7cdbd" stroke-width="1.2"/><line x1="1854.9" y1="1299.1" x2="1854.9" y2="1422" stroke="#f7cdbd" stroke-width="1.2"/><line x1="1858.4" y1="1365.1" x2="1858.4" y2="1422" stroke="#f7cdbd" stroke-width="1.2"/><line x1="1861.8" y1="1394.2" x2="1861.8" y2="1422" stroke="#f7cdbd" stroke-width="1.2"/><line x1="1865.3" y1="1379.3" x2="1865.3" y2="1422" stroke="#f7cdbd" stroke-width="1.2"/><line x1="1868.8" y1="1354.7" x2="1868.8" y2="1422" stroke="#f7cdbd" stroke-width="1.2"/><line x1="1872.2" y1="1258.0" x2="1872.2" y2="1422" stroke="#f7cdbd" stroke-width="1.2"/><line x1="1875.7" y1="1228.7" x2="1875.7" y2="1422" stroke="#f7cdbd" stroke-width="1.2"/><line x1="1879.2" y1="1262.5" x2="1879.2" y2="1422" stroke="#f7cdbd" stroke-width="1.2"/><line x1="1882.7" y1="1382.4" x2="1882.7" y2="1422" stroke="#f7cdbd" stroke-width="1.2"/><line x1="1886.1" y1="1383.8" x2="1886.1" y2="1422" stroke="#f7cdbd" stroke-width="1.2"/><line x1="1889.6" y1="1288.7" x2="1889.6" y2="1422" stroke="#f7cdbd" stroke-width="1.2"/><line x1="1893.1" y1="1316.0" x2="1893.1" y2="1422" stroke="#f7cdbd" stroke-width="1.2"/><line x1="1896.5" y1="1295.2" x2="1896.5" y2="1422" stroke="#f7cdbd" stroke-width="1.2"/><line x1="1900.0" y1="1356.6" x2="1900.0" y2="1422" stroke="#f7cdbd" stroke-width="1.2"/><line x1="1903.5" y1="1296.4" x2="1903.5" y2="1422" stroke="#f7cdbd" stroke-width="1.2"/><line x1="1906.9" y1="1316.1" x2="1906.9" y2="1422" stroke="#f7cdbd" stroke-width="1.2"/><line x1="1910.4" y1="1348.9" x2="1910.4" y2="1422" stroke="#f7cdbd" stroke-width="1.2"/><line x1="1913.9" y1="1348.2" x2="1913.9" y2="1422" stroke="#f7cdbd" stroke-width="1.2"/><line x1="1917.3" y1="1260.8" x2="1917.3" y2="1422" stroke="#f7cdbd" stroke-width="1.2"/><line x1="1920.8" y1="1339.5" x2="1920.8" y2="1422" stroke="#f7cdbd" stroke-width="1.2"/><line x1="1924.3" y1="1336.1" x2="1924.3" y2="1422" stroke="#f7cdbd" stroke-width="1.2"/><line x1="1927.8" y1="1386.9" x2="1927.8" y2="1422" stroke="#f7cdbd" stroke-width="1.2"/><line x1="1931.2" y1="1294.8" x2="1931.2" y2="1422" stroke="#f7cdbd" stroke-width="1.2"/><line x1="1934.7" y1="1346.7" x2="1934.7" y2="1422" stroke="#f7cdbd" stroke-width="1.2"/><line x1="1938.2" y1="1246.6" x2="1938.2" y2="1422" stroke="#f7cdbd" stroke-width="1.2"/><line x1="1941.6" y1="1363.2" x2="1941.6" y2="1422" stroke="#f7cdbd" stroke-width="1.2"/><line x1="1945.1" y1="1395.1" x2="1945.1" y2="1422" stroke="#f7cdbd" stroke-width="1.2"/><line x1="1948.6" y1="1247.0" x2="1948.6" y2="1422" stroke="#f7cdbd" stroke-width="1.2"/><line x1="1952.0" y1="1340.3" x2="1952.0" y2="1422" stroke="#f7cdbd" stroke-width="1.2"/><line x1="1955.5" y1="1344.0" x2="1955.5" y2="1422" stroke="#f7cdbd" stroke-width="1.2"/><line x1="1959.0" y1="1333.5" x2="1959.0" y2="1422" stroke="#f7cdbd" stroke-width="1.2"/><line x1="1962.5" y1="1378.5" x2="1962.5" y2="1422" stroke="#f7cdbd" stroke-width="1.2"/><line x1="1965.9" y1="1361.0" x2="1965.9" y2="1422" stroke="#f7cdbd" stroke-width="1.2"/><line x1="1969.4" y1="1371.0" x2="1969.4" y2="1422" stroke="#f7cdbd" stroke-width="1.2"/><line x1="1972.9" y1="1341.7" x2="1972.9" y2="1422" stroke="#f7cdbd" stroke-width="1.2"/><line x1="1976.3" y1="1368.6" x2="1976.3" y2="1422" stroke="#f7cdbd" stroke-width="1.2"/><line x1="1979.8" y1="1288.4" x2="1979.8" y2="1422" stroke="#f7cdbd" stroke-width="1.2"/><line x1="1983.3" y1="1341.3" x2="1983.3" y2="1422" stroke="#f7cdbd" stroke-width="1.2"/><line x1="1986.8" y1="1364.2" x2="1986.8" y2="1422" stroke="#f7cdbd" stroke-width="1.2"/><line x1="1990.2" y1="1394.8" x2="1990.2" y2="1422" stroke="#f7cdbd" stroke-width="1.2"/><line x1="1993.7" y1="1385.0" x2="1993.7" y2="1422" stroke="#f7cdbd" stroke-width="1.2"/><line x1="1997.2" y1="1348.3" x2="1997.2" y2="1422" stroke="#f7cdbd" stroke-width="1.2"/><line x1="2000.6" y1="1367.7" x2="2000.6" y2="1422" stroke="#f7cdbd" stroke-width="1.2"/><line x1="2004.1" y1="1311.0" x2="2004.1" y2="1422" stroke="#f7cdbd" stroke-width="1.2"/><line x1="2007.6" y1="1365.0" x2="2007.6" y2="1422" stroke="#f7cdbd" stroke-width="1.2"/><line x1="2011.0" y1="1296.2" x2="2011.0" y2="1422" stroke="#f7cdbd" stroke-width="1.2"/><line x1="2014.5" y1="1362.6" x2="2014.5" y2="1422" stroke="#f7cdbd" stroke-width="1.2"/><line x1="2018.0" y1="1379.4" x2="2018.0" y2="1422" stroke="#f7cdbd" stroke-width="1.2"/><line x1="2021.5" y1="1314.2" x2="2021.5" y2="1422" stroke="#f7cdbd" stroke-width="1.2"/><line x1="2024.9" y1="1297.8" x2="2024.9" y2="1422" stroke="#f7cdbd" stroke-width="1.2"/><line x1="2028.4" y1="1318.4" x2="2028.4" y2="1422" stroke="#f7cdbd" stroke-width="1.2"/><line x1="2031.9" y1="1314.3" x2="2031.9" y2="1422" stroke="#f7cdbd" stroke-width="1.2"/><line x1="2035.3" y1="1354.7" x2="2035.3" y2="1422" stroke="#f7cdbd" stroke-width="1.2"/><line x1="2038.8" y1="1364.2" x2="2038.8" y2="1422" stroke="#f7cdbd" stroke-width="1.2"/><line x1="2042.3" y1="1339.8" x2="2042.3" y2="1422" stroke="#f7cdbd" stroke-width="1.2"/><line x1="2045.7" y1="1290.2" x2="2045.7" y2="1422" stroke="#f7cdbd" stroke-width="1.2"/><line x1="2049.2" y1="1268.2" x2="2049.2" y2="1422" stroke="#f7cdbd" stroke-width="1.2"/><line x1="2052.7" y1="1285.9" x2="2052.7" y2="1422" stroke="#f7cdbd" stroke-width="1.2"/><line x1="2056.2" y1="1338.3" x2="2056.2" y2="1422" stroke="#f7cdbd" stroke-width="1.2"/><line x1="2059.6" y1="1369.6" x2="2059.6" y2="1422" stroke="#f7cdbd" stroke-width="1.2"/><line x1="2063.1" y1="1381.6" x2="2063.1" y2="1422" stroke="#f7cdbd" stroke-width="1.2"/><line x1="2066.6" y1="1356.0" x2="2066.6" y2="1422" stroke="#f7cdbd" stroke-width="1.2"/><line x1="2070.0" y1="1288.9" x2="2070.0" y2="1422" stroke="#f7cdbd" stroke-width="1.2"/><line x1="2073.5" y1="1353.3" x2="2073.5" y2="1422" stroke="#f7cdbd" stroke-width="1.2"/><line x1="2077.0" y1="1337.9" x2="2077.0" y2="1422" stroke="#f7cdbd" stroke-width="1.2"/><line x1="2080.4" y1="1284.3" x2="2080.4" y2="1422" stroke="#f7cdbd" stroke-width="1.2"/><line x1="2083.9" y1="1339.2" x2="2083.9" y2="1422" stroke="#f7cdbd" stroke-width="1.2"/><line x1="2087.4" y1="1366.9" x2="2087.4" y2="1422" stroke="#f7cdbd" stroke-width="1.2"/><line x1="2090.8" y1="1237.1" x2="2090.8" y2="1422" stroke="#f7cdbd" stroke-width="1.2"/><line x1="2094.3" y1="1370.2" x2="2094.3" y2="1422" stroke="#f7cdbd" stroke-width="1.2"/><line x1="2097.8" y1="1375.7" x2="2097.8" y2="1422" stroke="#f7cdbd" stroke-width="1.2"/><line x1="2101.3" y1="1377.0" x2="2101.3" y2="1422" stroke="#f7cdbd" stroke-width="1.2"/><line x1="2104.7" y1="1345.9" x2="2104.7" y2="1422" stroke="#f7cdbd" stroke-width="1.2"/><line x1="2108.2" y1="1318.6" x2="2108.2" y2="1422" stroke="#f7cdbd" stroke-width="1.2"/><line x1="2111.7" y1="1376.2" x2="2111.7" y2="1422" stroke="#f7cdbd" stroke-width="1.2"/><line x1="2115.1" y1="1313.9" x2="2115.1" y2="1422" stroke="#f7cdbd" stroke-width="1.2"/><line x1="2118.6" y1="1337.2" x2="2118.6" y2="1422" stroke="#f7cdbd" stroke-width="1.2"/><line x1="2122.1" y1="1284.0" x2="2122.1" y2="1422" stroke="#f7cdbd" stroke-width="1.2"/><line x1="2125.6" y1="1380.1" x2="2125.6" y2="1422" stroke="#f7cdbd" stroke-width="1.2"/><line x1="2129.0" y1="1349.5" x2="2129.0" y2="1422" stroke="#f7cdbd" stroke-width="1.2"/><line x1="2132.5" y1="1388.2" x2="2132.5" y2="1422" stroke="#f7cdbd" stroke-width="1.2"/><line x1="2136.0" y1="1341.6" x2="2136.0" y2="1422" stroke="#f7cdbd" stroke-width="1.2"/><line x1="2139.4" y1="1330.4" x2="2139.4" y2="1422" stroke="#f7cdbd" stroke-width="1.2"/><line x1="2142.9" y1="1341.2" x2="2142.9" y2="1422" stroke="#f7cdbd" stroke-width="1.2"/><line x1="2146.4" y1="1301.7" x2="2146.4" y2="1422" stroke="#f7cdbd" stroke-width="1.2"/><line x1="2149.8" y1="1392.5" x2="2149.8" y2="1422" stroke="#f7cdbd" stroke-width="1.2"/><line x1="2153.3" y1="1319.6" x2="2153.3" y2="1422" stroke="#f7cdbd" stroke-width="1.2"/><line x1="2156.8" y1="1340.0" x2="2156.8" y2="1422" stroke="#f7cdbd" stroke-width="1.2"/><line x1="2160.2" y1="1295.1" x2="2160.2" y2="1422" stroke="#f7cdbd" stroke-width="1.2"/><line x1="2163.7" y1="1344.9" x2="2163.7" y2="1422" stroke="#f7cdbd" stroke-width="1.2"/><line x1="2167.2" y1="1344.5" x2="2167.2" y2="1422" stroke="#f7cdbd" stroke-width="1.2"/><line x1="2170.7" y1="1375.7" x2="2170.7" y2="1422" stroke="#f7cdbd" stroke-width="1.2"/><line x1="2174.1" y1="1287.0" x2="2174.1" y2="1422" stroke="#f7cdbd" stroke-width="1.2"/><line x1="2177.6" y1="1388.2" x2="2177.6" y2="1422" stroke="#f7cdbd" stroke-width="1.2"/><line x1="2181.1" y1="1381.7" x2="2181.1" y2="1422" stroke="#f7cdbd" stroke-width="1.2"/><line x1="2184.5" y1="1386.3" x2="2184.5" y2="1422" stroke="#f7cdbd" stroke-width="1.2"/><line x1="2188.0" y1="1383.9" x2="2188.0" y2="1422" stroke="#f7cdbd" stroke-width="1.2"/><line x1="2191.5" y1="1377.8" x2="2191.5" y2="1422" stroke="#f7cdbd" stroke-width="1.2"/><line x1="2194.9" y1="1328.3" x2="2194.9" y2="1422" stroke="#f7cdbd" stroke-width="1.2"/><line x1="2198.4" y1="1385.3" x2="2198.4" y2="1422" stroke="#f7cdbd" stroke-width="1.2"/><line x1="2201.9" y1="1394.8" x2="2201.9" y2="1422" stroke="#f7cdbd" stroke-width="1.2"/><line x1="2205.4" y1="1395.0" x2="2205.4" y2="1422" stroke="#f7cdbd" stroke-width="1.2"/><line x1="2208.8" y1="1311.4" x2="2208.8" y2="1422" stroke="#f7cdbd" stroke-width="1.2"/><line x1="2212.3" y1="1367.6" x2="2212.3" y2="1422" stroke="#f7cdbd" stroke-width="1.2"/><line x1="2215.8" y1="1276.5" x2="2215.8" y2="1422" stroke="#f7cdbd" stroke-width="1.2"/><line x1="2219.2" y1="1319.1" x2="2219.2" y2="1422" stroke="#f7cdbd" stroke-width="1.2"/><line x1="2222.7" y1="1346.2" x2="2222.7" y2="1422" stroke="#f7cdbd" stroke-width="1.2"/><line x1="2226.2" y1="1365.7" x2="2226.2" y2="1422" stroke="#f7cdbd" stroke-width="1.2"/><line x1="2229.7" y1="1283.4" x2="2229.7" y2="1422" stroke="#f7cdbd" stroke-width="1.2"/><line x1="2233.1" y1="1346.3" x2="2233.1" y2="1422" stroke="#f7cdbd" stroke-width="1.2"/><line x1="2236.6" y1="1305.9" x2="2236.6" y2="1422" stroke="#f7cdbd" stroke-width="1.2"/><line x1="2240.1" y1="1375.2" x2="2240.1" y2="1422" stroke="#f7cdbd" stroke-width="1.2"/><line x1="2243.5" y1="1388.2" x2="2243.5" y2="1422" stroke="#f7cdbd" stroke-width="1.2"/><line x1="1587.2" y1="1179.6" x2="1587.2" y2="1422" stroke="#f5c4b0" stroke-width="1.3"/><line x1="1587.2" y1="1179.6" x2="1587.2" y2="1422.0" stroke="#f15c2e" stroke-width="2.3" opacity="0.92"/><line x1="1594.1" y1="1272.4" x2="1594.1" y2="1422" stroke="#f5c4b0" stroke-width="1.3"/><line x1="1594.1" y1="1272.4" x2="1594.1" y2="1345.8" stroke="#f15c2e" stroke-width="2.3" opacity="0.92"/><line x1="1598.2" y1="1285.0" x2="1598.2" y2="1422" stroke="#f5c4b0" stroke-width="1.3"/><line x1="1598.2" y1="1285.0" x2="1598.2" y2="1422.0" stroke="#f15c2e" stroke-width="2.3" opacity="0.92"/><line x1="1613.9" y1="1229.9" x2="1613.9" y2="1422" stroke="#f5c4b0" stroke-width="1.3"/><line x1="1613.9" y1="1229.9" x2="1613.9" y2="1422.0" stroke="#f15c2e" stroke-width="2.3" opacity="0.92"/><line x1="1624.9" y1="1285.0" x2="1624.9" y2="1422" stroke="#f5c4b0" stroke-width="1.3"/><line x1="1624.9" y1="1285.0" x2="1624.9" y2="1398.5" stroke="#f15c2e" stroke-width="2.3" opacity="0.92"/><line x1="1709.8" y1="1218.9" x2="1709.8" y2="1422" stroke="#f5c4b0" stroke-width="1.3"/><line x1="1709.8" y1="1218.9" x2="1709.8" y2="1321.5" stroke="#f15c2e" stroke-width="2.3" opacity="0.92"/><line x1="1751.3" y1="1162.3" x2="1751.3" y2="1422" stroke="#f5c4b0" stroke-width="1.3"/><line x1="1751.3" y1="1162.3" x2="1751.3" y2="1422.0" stroke="#f15c2e" stroke-width="2.3" opacity="0.92"/><line x1="1801.0" y1="1176.5" x2="1801.0" y2="1422" stroke="#f5c4b0" stroke-width="1.3"/><line x1="1801.0" y1="1176.5" x2="1801.0" y2="1422.0" stroke="#f15c2e" stroke-width="2.3" opacity="0.92"/><line x1="1874.9" y1="1229.9" x2="1874.9" y2="1422" stroke="#f5c4b0" stroke-width="1.3"/><line x1="1874.9" y1="1229.9" x2="1874.9" y2="1313.8" stroke="#f15c2e" stroke-width="2.3" opacity="0.92"/><line x1="1913.6" y1="1196.9" x2="1913.6" y2="1422" stroke="#f5c4b0" stroke-width="1.3"/><line x1="1913.6" y1="1196.9" x2="1913.6" y2="1308.3" stroke="#f15c2e" stroke-width="2.3" opacity="0.92"/><line x1="1916.7" y1="1240.9" x2="1916.7" y2="1422" stroke="#f5c4b0" stroke-width="1.3"/><line x1="1916.7" y1="1240.9" x2="1916.7" y2="1401.2" stroke="#f15c2e" stroke-width="2.3" opacity="0.92"/><line x1="1927.4" y1="1198.5" x2="1927.4" y2="1422" stroke="#f5c4b0" stroke-width="1.3"/><line x1="1927.4" y1="1198.5" x2="1927.4" y2="1306.8" stroke="#f15c2e" stroke-width="2.3" opacity="0.92"/><line x1="1977.7" y1="1251.9" x2="1977.7" y2="1422" stroke="#f5c4b0" stroke-width="1.3"/><line x1="1977.7" y1="1251.9" x2="1977.7" y2="1340.4" stroke="#f15c2e" stroke-width="2.3" opacity="0.92"/><line x1="2001.6" y1="1240.9" x2="2001.6" y2="1422" stroke="#f5c4b0" stroke-width="1.3"/><line x1="2001.6" y1="1240.9" x2="2001.6" y2="1422.0" stroke="#f15c2e" stroke-width="2.3" opacity="0.92"/><line x1="2085.6" y1="1229.9" x2="2085.6" y2="1422" stroke="#f5c4b0" stroke-width="1.3"/><line x1="2085.6" y1="1229.9" x2="2085.6" y2="1422.0" stroke="#f15c2e" stroke-width="2.3" opacity="0.92"/><line x1="2100.4" y1="1196.9" x2="2100.4" y2="1422" stroke="#f5c4b0" stroke-width="1.3"/><line x1="2100.4" y1="1196.9" x2="2100.4" y2="1422.0" stroke="#f15c2e" stroke-width="2.3" opacity="0.92"/><line x1="2154.8" y1="1185.9" x2="2154.8" y2="1422" stroke="#f5c4b0" stroke-width="1.3"/><line x1="2154.8" y1="1185.9" x2="2154.8" y2="1333.8" stroke="#f15c2e" stroke-width="2.3" opacity="0.92"/><line x1="2178.4" y1="1176.5" x2="2178.4" y2="1422" stroke="#f5c4b0" stroke-width="1.3"/><line x1="2178.4" y1="1176.5" x2="2178.4" y2="1422.0" stroke="#f15c2e" stroke-width="2.3" opacity="0.92"/><line x1="2197.9" y1="1272.4" x2="2197.9" y2="1422" stroke="#f5c4b0" stroke-width="1.3"/><line x1="2197.9" y1="1272.4" x2="2197.9" y2="1325.2" stroke="#f15c2e" stroke-width="2.3" opacity="0.92"/><line x1="2225.5" y1="1251.9" x2="2225.5" y2="1422" stroke="#f5c4b0" stroke-width="1.3"/><line x1="2225.5" y1="1251.9" x2="2225.5" y2="1422.0" stroke="#f15c2e" stroke-width="2.3" opacity="0.92"/><line x1="2213.0" y1="1285.0" x2="2213.0" y2="1422" stroke="#f5c4b0" stroke-width="1.3"/><line x1="2213.0" y1="1285.0" x2="2213.0" y2="1422.0" stroke="#f15c2e" stroke-width="2.3" opacity="0.92"/><line x1="2219.9" y1="1294.4" x2="2219.9" y2="1422" stroke="#f5c4b0" stroke-width="1.3"/><line x1="2219.9" y1="1294.4" x2="2219.9" y2="1422.0" stroke="#f15c2e" stroke-width="2.3" opacity="0.92"/><line x1="1570.8" y1="1316.4" x2="1570.8" y2="1422" stroke="#f5c4b0" stroke-width="1.3"/><line x1="1570.8" y1="1316.4" x2="1570.8" y2="1422.0" stroke="#f15c2e" stroke-width="2.3" opacity="0.92"/><line x1="1740.6" y1="1285.0" x2="1740.6" y2="1422" stroke="#f5c4b0" stroke-width="1.3"/><line x1="1740.6" y1="1285.0" x2="1740.6" y2="1422.0" stroke="#f15c2e" stroke-width="2.3" opacity="0.92"/><line x1="1759.5" y1="1307.0" x2="1759.5" y2="1422" stroke="#f5c4b0" stroke-width="1.3"/><line x1="1759.5" y1="1307.0" x2="1759.5" y2="1422.0" stroke="#f15c2e" stroke-width="2.3" opacity="0.92"/><line x1="1767.0" y1="1316.4" x2="1767.0" y2="1422" stroke="#f5c4b0" stroke-width="1.3"/><line x1="1767.0" y1="1316.4" x2="1767.0" y2="1422.0" stroke="#f15c2e" stroke-width="2.3" opacity="0.92"/><line x1="1777.4" y1="1316.4" x2="1777.4" y2="1422" stroke="#f5c4b0" stroke-width="1.3"/><line x1="1777.4" y1="1316.4" x2="1777.4" y2="1384.1" stroke="#f15c2e" stroke-width="2.3" opacity="0.92"/><line x1="1859.2" y1="1316.4" x2="1859.2" y2="1422" stroke="#f5c4b0" stroke-width="1.3"/><line x1="1859.2" y1="1316.4" x2="1859.2" y2="1391.6" stroke="#f15c2e" stroke-width="2.3" opacity="0.92"/><line x1="1889.7" y1="1294.4" x2="1889.7" y2="1422" stroke="#f5c4b0" stroke-width="1.3"/><line x1="1889.7" y1="1294.4" x2="1889.7" y2="1400.8" stroke="#f15c2e" stroke-width="2.3" opacity="0.92"/><line x1="1950.4" y1="1294.4" x2="1950.4" y2="1422" stroke="#f5c4b0" stroke-width="1.3"/><line x1="1950.4" y1="1294.4" x2="1950.4" y2="1422.0" stroke="#f15c2e" stroke-width="2.3" opacity="0.92"/><line x1="1961.4" y1="1325.8" x2="1961.4" y2="1422" stroke="#f5c4b0" stroke-width="1.3"/><line x1="1961.4" y1="1325.8" x2="1961.4" y2="1422.0" stroke="#f15c2e" stroke-width="2.3" opacity="0.92"/><line x1="2018.0" y1="1307.0" x2="2018.0" y2="1422" stroke="#f5c4b0" stroke-width="1.3"/><line x1="2018.0" y1="1307.0" x2="2018.0" y2="1356.7" stroke="#f15c2e" stroke-width="2.3" opacity="0.92"/><line x1="2025.8" y1="1307.0" x2="2025.8" y2="1422" stroke="#f5c4b0" stroke-width="1.3"/><line x1="2025.8" y1="1307.0" x2="2025.8" y2="1387.9" stroke="#f15c2e" stroke-width="2.3" opacity="0.92"/><line x1="2032.1" y1="1316.4" x2="2032.1" y2="1422" stroke="#f5c4b0" stroke-width="1.3"/><line x1="2032.1" y1="1316.4" x2="2032.1" y2="1422.0" stroke="#f15c2e" stroke-width="2.3" opacity="0.92"/><line x1="2043.1" y1="1285.0" x2="2043.1" y2="1422" stroke="#f5c4b0" stroke-width="1.3"/><line x1="2043.1" y1="1285.0" x2="2043.1" y2="1400.2" stroke="#f15c2e" stroke-width="2.3" opacity="0.92"/><line x1="2040.0" y1="1272.4" x2="2040.0" y2="1422" stroke="#f5c4b0" stroke-width="1.3"/><line x1="2040.0" y1="1272.4" x2="2040.0" y2="1385.1" stroke="#f15c2e" stroke-width="2.3" opacity="0.92"/><line x1="2059.5" y1="1294.4" x2="2059.5" y2="1422" stroke="#f5c4b0" stroke-width="1.3"/><line x1="2059.5" y1="1294.4" x2="2059.5" y2="1348.8" stroke="#f15c2e" stroke-width="2.3" opacity="0.92"/><line x1="2185.3" y1="1316.4" x2="2185.3" y2="1422" stroke="#f5c4b0" stroke-width="1.3"/><line x1="2185.3" y1="1316.4" x2="2185.3" y2="1382.7" stroke="#f15c2e" stroke-width="2.3" opacity="0.92"/><line x1="2144.4" y1="1316.4" x2="2144.4" y2="1422" stroke="#f5c4b0" stroke-width="1.3"/><line x1="2144.4" y1="1316.4" x2="2144.4" y2="1400.1" stroke="#f15c2e" stroke-width="2.3" opacity="0.92"/><line x1="2235.6" y1="1327.4" x2="2235.6" y2="1422" stroke="#f5c4b0" stroke-width="1.3"/><line x1="2235.6" y1="1327.4" x2="2235.6" y2="1390.9" stroke="#f15c2e" stroke-width="2.3" opacity="0.92"/><line x1="1832.5" y1="1307.0" x2="1832.5" y2="1422" stroke="#f5c4b0" stroke-width="1.3"/><line x1="1832.5" y1="1307.0" x2="1832.5" y2="1390.4" stroke="#f15c2e" stroke-width="2.3" opacity="0.92"/><line x1="1817.4" y1="1316.4" x2="1817.4" y2="1422" stroke="#f5c4b0" stroke-width="1.3"/><line x1="1817.4" y1="1316.4" x2="1817.4" y2="1366.7" stroke="#f15c2e" stroke-width="2.3" opacity="0.92"/><line x1="1879.0" y1="1316.4" x2="1879.0" y2="1422" stroke="#f5c4b0" stroke-width="1.3"/><line x1="1879.0" y1="1316.4" x2="1879.0" y2="1422.0" stroke="#f15c2e" stroke-width="2.3" opacity="0.92"/><line x1="1901.6" y1="1316.4" x2="1901.6" y2="1422" stroke="#f5c4b0" stroke-width="1.3"/><line x1="1901.6" y1="1316.4" x2="1901.6" y2="1422.0" stroke="#f15c2e" stroke-width="2.3" opacity="0.92"/><line x1="1553.0" y1="1343.4" x2="1553.0" y2="1392.7" stroke="#f15c2e" stroke-width="2.3" opacity="0.92"/><line x1="1559.9" y1="1369.7" x2="1559.9" y2="1422.0" stroke="#f15c2e" stroke-width="2.3" opacity="0.92"/><line x1="1580.8" y1="1314.6" x2="1580.8" y2="1383.9" stroke="#f15c2e" stroke-width="2.3" opacity="0.92"/><line x1="1629.3" y1="1401.1" x2="1629.3" y2="1415.5" stroke="#f15c2e" stroke-width="2.3" opacity="0.92"/><line x1="1636.3" y1="1294.1" x2="1636.3" y2="1355.4" stroke="#f15c2e" stroke-width="2.3" opacity="0.92"/><line x1="1643.2" y1="1348.6" x2="1643.2" y2="1395.3" stroke="#f15c2e" stroke-width="2.3" opacity="0.92"/><line x1="1664.0" y1="1323.2" x2="1664.0" y2="1348.6" stroke="#f15c2e" stroke-width="2.3" opacity="0.92"/><line x1="1677.9" y1="1354.3" x2="1677.9" y2="1383.0" stroke="#f15c2e" stroke-width="2.3" opacity="0.92"/><line x1="1684.9" y1="1371.4" x2="1684.9" y2="1422.0" stroke="#f15c2e" stroke-width="2.3" opacity="0.92"/><line x1="1691.8" y1="1332.6" x2="1691.8" y2="1355.9" stroke="#f15c2e" stroke-width="2.3" opacity="0.92"/><line x1="1698.7" y1="1294.4" x2="1698.7" y2="1346.9" stroke="#f15c2e" stroke-width="2.3" opacity="0.92"/><line x1="1705.7" y1="1327.2" x2="1705.7" y2="1359.0" stroke="#f15c2e" stroke-width="2.3" opacity="0.92"/><line x1="1719.6" y1="1330.6" x2="1719.6" y2="1381.4" stroke="#f15c2e" stroke-width="2.3" opacity="0.92"/><line x1="1726.5" y1="1326.3" x2="1726.5" y2="1378.2" stroke="#f15c2e" stroke-width="2.3" opacity="0.92"/><line x1="1782.0" y1="1383.9" x2="1782.0" y2="1422.0" stroke="#f15c2e" stroke-width="2.3" opacity="0.92"/><line x1="1789.0" y1="1343.1" x2="1789.0" y2="1422.0" stroke="#f15c2e" stroke-width="2.3" opacity="0.92"/><line x1="1795.9" y1="1331.2" x2="1795.9" y2="1392.7" stroke="#f15c2e" stroke-width="2.3" opacity="0.92"/><line x1="1809.8" y1="1378.5" x2="1809.8" y2="1415.4" stroke="#f15c2e" stroke-width="2.3" opacity="0.92"/><line x1="1823.7" y1="1374.3" x2="1823.7" y2="1387.6" stroke="#f15c2e" stroke-width="2.3" opacity="0.92"/><line x1="1844.5" y1="1335.8" x2="1844.5" y2="1371.1" stroke="#f15c2e" stroke-width="2.3" opacity="0.92"/><line x1="1851.4" y1="1378.5" x2="1851.4" y2="1412.4" stroke="#f15c2e" stroke-width="2.3" opacity="0.92"/><line x1="1865.3" y1="1337.5" x2="1865.3" y2="1386.5" stroke="#f15c2e" stroke-width="2.3" opacity="0.92"/><line x1="1906.9" y1="1351.2" x2="1906.9" y2="1400.9" stroke="#f15c2e" stroke-width="2.3" opacity="0.92"/><line x1="1920.8" y1="1403.0" x2="1920.8" y2="1409.2" stroke="#f15c2e" stroke-width="2.3" opacity="0.92"/><line x1="1934.7" y1="1384.2" x2="1934.7" y2="1415.8" stroke="#f15c2e" stroke-width="2.3" opacity="0.92"/><line x1="1941.6" y1="1383.9" x2="1941.6" y2="1402.5" stroke="#f15c2e" stroke-width="2.3" opacity="0.92"/><line x1="1983.3" y1="1314.8" x2="1983.3" y2="1399.9" stroke="#f15c2e" stroke-width="2.3" opacity="0.92"/><line x1="1990.2" y1="1396.2" x2="1990.2" y2="1422.0" stroke="#f15c2e" stroke-width="2.3" opacity="0.92"/><line x1="2011.0" y1="1388.6" x2="2011.0" y2="1408.4" stroke="#f15c2e" stroke-width="2.3" opacity="0.92"/><line x1="2052.7" y1="1318.5" x2="2052.7" y2="1376.9" stroke="#f15c2e" stroke-width="2.3" opacity="0.92"/><line x1="2066.6" y1="1402.1" x2="2066.6" y2="1418.6" stroke="#f15c2e" stroke-width="2.3" opacity="0.92"/><line x1="2080.4" y1="1341.3" x2="2080.4" y2="1374.6" stroke="#f15c2e" stroke-width="2.3" opacity="0.92"/><line x1="2094.3" y1="1373.0" x2="2094.3" y2="1410.2" stroke="#f15c2e" stroke-width="2.3" opacity="0.92"/><line x1="2108.2" y1="1404.3" x2="2108.2" y2="1418.2" stroke="#f15c2e" stroke-width="2.3" opacity="0.92"/><line x1="2115.1" y1="1406.7" x2="2115.1" y2="1419.0" stroke="#f15c2e" stroke-width="2.3" opacity="0.92"/><line x1="2122.1" y1="1294.2" x2="2122.1" y2="1334.5" stroke="#f15c2e" stroke-width="2.3" opacity="0.92"/><line x1="2136.0" y1="1335.4" x2="2136.0" y2="1390.7" stroke="#f15c2e" stroke-width="2.3" opacity="0.92"/><line x1="2149.8" y1="1364.9" x2="2149.8" y2="1422.0" stroke="#f15c2e" stroke-width="2.3" opacity="0.92"/><line x1="2163.7" y1="1337.0" x2="2163.7" y2="1373.8" stroke="#f15c2e" stroke-width="2.3" opacity="0.92"/><line x1="2191.5" y1="1353.8" x2="2191.5" y2="1422.0" stroke="#f15c2e" stroke-width="2.3" opacity="0.92"/><line x1="2240.1" y1="1377.3" x2="2240.1" y2="1404.6" stroke="#f15c2e" stroke-width="2.3" opacity="0.92"/><polyline points="1551.0,1189.1 1555.1,1178.1 1558.9,1231.5 1562.6,1170.2 1565.8,1184.3 1569.9,1174.9 1577.7,1235.3 1585.6,1137.2 1589.7,1207.9 1593.5,1149.7 1597.2,1151.3 1601.3,1209.5 1608.6,1193.8 1612.3,1145.0 1617.0,1170.2 1623.3,1154.5 1631.2,1203.2 1640.0,1179.6 1643.8,1233.1 1651.6,1182.8 1654.8,1190.6 1658.9,1168.6 1665.8,1261.4 1669.6,1168.0 1674.6,1168.6 1677.7,1195.3 1685.3,1178.1 1689.4,1203.2 1697.2,1181.2 1701.0,1145.0 1705.1,1157.6 1708.2,1149.7 1716.1,1201.6 1719.9,1170.2 1724.0,1190.6 1728.1,1165.5 1731.8,1330.6 1739.7,1162.3 1743.8,1182.8 1747.5,1182.8 1751.3,1130.3 1755.4,1154.5 1759.5,1157.6 1763.3,1176.5 1771.1,1171.8 1774.3,1159.2 1778.4,1159.2 1781.5,1237.8 1785.3,1190.6 1790.0,1181.2 1793.1,1184.3 1797.2,1174.9 1801.0,1138.7 1808.9,1218.9 1812.0,1184.3 1816.7,1170.2 1820.5,1173.3 1824.6,1157.6 1827.7,1154.5 1831.8,1165.5 1838.7,1209.5 1842.5,1184.3 1846.6,1182.8 1851.3,1176.5 1854.5,1179.6 1858.2,1154.5 1863.9,1193.8 1868.6,1198.5 1873.3,1145.0 1877.1,1160.8 1882.1,1259.8 1885.3,1163.9 1889.7,1157.6 1893.8,1163.9 1896.9,1217.4 1901.6,1168.6 1904.8,1182.8 1912.6,1138.7 1917.4,1156.0 1921.1,1193.8 1924.3,1198.5 1927.4,1148.2 1931.5,1176.5 1935.6,1181.2 1939.4,1179.6 1943.1,1189.1 1947.2,1156.0 1951.3,1160.8 1954.5,1190.6 1959.8,1187.5 1963.0,1182.8 1966.1,1270.8 1970.2,1174.9 1974.0,1193.8 1977.7,1162.3 1983.4,1154.5 1987.2,1157.6 1992.8,1211.1 2000.7,1151.3 2004.8,1196.9 2008.6,1179.6 2015.5,1160.8 2019.6,1181.2 2024.3,1171.8 2032.1,1174.9 2035.3,1218.9 2040.0,1162.3 2043.8,1162.3 2049.4,1192.2 2054.2,1192.2 2058.2,1170.2 2062.0,1185.9 2065.8,1162.3 2069.9,1193.8 2074.0,1185.9 2077.7,1201.6 2085.6,1141.9 2088.7,1193.8 2092.8,1171.8 2097.2,1173.3 2100.4,1141.9 2106.0,1190.6 2111.7,1190.6 2117.0,1215.8 2120.2,1217.4 2127.4,1170.2 2132.8,1176.5 2137.5,1179.6 2140.0,1190.6 2143.8,1179.6 2146.9,1179.6 2150.7,1190.6 2154.8,1145.0 2158.9,1181.2 2165.8,1160.8 2169.9,1233.1 2176.8,1135.6 2181.5,1190.6 2185.3,1173.3 2194.1,1185.9 2197.2,1157.6 2201.0,1214.2 2205.1,1192.2 2213.0,1154.5 2216.1,1163.9 2220.8,1154.5 2224.9,1154.5 2228.7,1184.3 2235.6,1170.2 2239.7,1229.9 2244.4,1220.5 2247.5,1170.2" fill="none" stroke="#1d5a51" stroke-width="4.4" stroke-linejoin="round"/><line x1="1550.0" y1="1422" x2="1550.0" y2="1439" stroke="#ccd0dd" stroke-width="1.5"/><line x1="1580.7" y1="1422" x2="1580.7" y2="1439" stroke="#ccd0dd" stroke-width="1.5"/><line x1="1611.4" y1="1422" x2="1611.4" y2="1439" stroke="#ccd0dd" stroke-width="1.5"/><line x1="1642.2" y1="1422" x2="1642.2" y2="1439" stroke="#ccd0dd" stroke-width="1.5"/><line x1="1672.9" y1="1422" x2="1672.9" y2="1439" stroke="#ccd0dd" stroke-width="1.5"/><line x1="1703.6" y1="1422" x2="1703.6" y2="1439" stroke="#ccd0dd" stroke-width="1.5"/><line x1="1734.3" y1="1422" x2="1734.3" y2="1439" stroke="#ccd0dd" stroke-width="1.5"/><line x1="1765.0" y1="1422" x2="1765.0" y2="1439" stroke="#ccd0dd" stroke-width="1.5"/><line x1="1795.8" y1="1422" x2="1795.8" y2="1439" stroke="#ccd0dd" stroke-width="1.5"/><line x1="1826.5" y1="1422" x2="1826.5" y2="1439" stroke="#ccd0dd" stroke-width="1.5"/><line x1="1857.2" y1="1422" x2="1857.2" y2="1439" stroke="#ccd0dd" stroke-width="1.5"/><line x1="1887.9" y1="1422" x2="1887.9" y2="1439" stroke="#ccd0dd" stroke-width="1.5"/><line x1="1918.6" y1="1422" x2="1918.6" y2="1439" stroke="#ccd0dd" stroke-width="1.5"/><line x1="1949.4" y1="1422" x2="1949.4" y2="1439" stroke="#ccd0dd" stroke-width="1.5"/><line x1="1980.1" y1="1422" x2="1980.1" y2="1439" stroke="#ccd0dd" stroke-width="1.5"/><line x1="2010.8" y1="1422" x2="2010.8" y2="1439" stroke="#ccd0dd" stroke-width="1.5"/><line x1="2041.5" y1="1422" x2="2041.5" y2="1439" stroke="#ccd0dd" stroke-width="1.5"/><line x1="2072.2" y1="1422" x2="2072.2" y2="1439" stroke="#ccd0dd" stroke-width="1.5"/><line x1="2103.0" y1="1422" x2="2103.0" y2="1439" stroke="#ccd0dd" stroke-width="1.5"/><line x1="2133.7" y1="1422" x2="2133.7" y2="1439" stroke="#ccd0dd" stroke-width="1.5"/><line x1="2164.4" y1="1422" x2="2164.4" y2="1439" stroke="#ccd0dd" stroke-width="1.5"/><line x1="2195.1" y1="1422" x2="2195.1" y2="1439" stroke="#ccd0dd" stroke-width="1.5"/><line x1="2225.8" y1="1422" x2="2225.8" y2="1439" stroke="#ccd0dd" stroke-width="1.5"/></svg>
<div class="t" style="left:1447.0px;top:1088.6px;font-size:17px;line-height:17px;color:#444;letter-spacing:-0.14px;">10,000.00</div>
<div class="t" style="left:1456.3px;top:1120.9px;font-size:17px;line-height:17px;color:#444;letter-spacing:-0.14px;">4,000.00</div>
<div class="t" style="left:1456.3px;top:1145.4px;font-size:17px;line-height:17px;color:#444;letter-spacing:-0.14px;">2,000.00</div>
<div class="t" style="left:1456.3px;top:1169.9px;font-size:17px;line-height:17px;color:#444;letter-spacing:-0.14px;">1,000.00</div>
<div class="t" style="left:1470.3px;top:1202.2px;font-size:17px;line-height:17px;color:#444;letter-spacing:-0.16px;">400.00</div>
<div class="t" style="left:1470.3px;top:1226.7px;font-size:17px;line-height:17px;color:#444;letter-spacing:-0.16px;">200.00</div>
<div class="t" style="left:1470.3px;top:1251.1px;font-size:17px;line-height:17px;color:#444;letter-spacing:-0.16px;">100.00</div>
<div class="t" style="left:1479.6px;top:1283.4px;font-size:17px;line-height:17px;color:#444;letter-spacing:-0.16px;">40.00</div>
<div class="t" style="left:1479.6px;top:1307.9px;font-size:17px;line-height:17px;color:#444;letter-spacing:-0.16px;">20.00</div>
<div class="t" style="left:1479.6px;top:1332.4px;font-size:17px;line-height:17px;color:#444;letter-spacing:-0.16px;">10.00</div>
<div class="t" style="left:1488.9px;top:1364.7px;font-size:17px;line-height:17px;color:#444;letter-spacing:-0.17px;">4.00</div>
<div class="t" style="left:1488.9px;top:1389.2px;font-size:17px;line-height:17px;color:#444;letter-spacing:-0.17px;">2.00</div>
<div class="t" style="left:1488.9px;top:1413.6px;font-size:17px;line-height:17px;color:#444;letter-spacing:-0.17px;">1.00</div>
<div class="t" style="left:2275.5px;top:1414.6px;font-size:17px;line-height:17px;color:#444;">0</div>
<div class="t" style="left:2275.5px;top:1306.3px;font-size:17px;line-height:17px;color:#444;">10</div>
<div class="t" style="left:2275.5px;top:1198.0px;font-size:17px;line-height:17px;color:#444;">20</div>
<div class="t" style="left:2275.5px;top:1089.7px;font-size:17px;line-height:17px;color:#444;">30</div>
<div class="t" style="left:1461.5px;top:1435.2px;width:89.5px;font-size:17.5px;line-height:17.5px;color:#4a4a4a;text-align:right;-webkit-text-stroke:0.15px;transform:rotate(-45deg);transform-origin:89.5px 14.8px;">01-15-2020</div>
<div class="t" style="left:1492.2px;top:1435.2px;width:89.5px;font-size:17.5px;line-height:17.5px;color:#4a4a4a;text-align:right;-webkit-text-stroke:0.15px;transform:rotate(-45deg);transform-origin:89.5px 14.8px;">01-30-2020</div>
<div class="t" style="left:1522.9px;top:1435.2px;width:89.5px;font-size:17.5px;line-height:17.5px;color:#4a4a4a;text-align:right;-webkit-text-stroke:0.15px;transform:rotate(-45deg);transform-origin:89.5px 14.8px;">02-13-2020</div>
<div class="t" style="left:1553.6px;top:1435.2px;width:89.5px;font-size:17.5px;line-height:17.5px;color:#4a4a4a;text-align:right;-webkit-text-stroke:0.15px;transform:rotate(-45deg);transform-origin:89.5px 14.8px;">02-28-2020</div>
<div class="t" style="left:1584.4px;top:1435.2px;width:89.5px;font-size:17.5px;line-height:17.5px;color:#4a4a4a;text-align:right;-webkit-text-stroke:0.15px;transform:rotate(-45deg);transform-origin:89.5px 14.8px;">03-09-2020</div>
<div class="t" style="left:1615.1px;top:1435.2px;width:89.5px;font-size:17.5px;line-height:17.5px;color:#4a4a4a;text-align:right;-webkit-text-stroke:0.15px;transform:rotate(-45deg);transform-origin:89.5px 14.8px;">03-18-2020</div>
<div class="t" style="left:1645.8px;top:1435.2px;width:89.5px;font-size:17.5px;line-height:17.5px;color:#4a4a4a;text-align:right;-webkit-text-stroke:0.15px;transform:rotate(-45deg);transform-origin:89.5px 14.8px;">04-01-2020</div>
<div class="t" style="left:1676.5px;top:1435.2px;width:89.5px;font-size:17.5px;line-height:17.5px;color:#4a4a4a;text-align:right;-webkit-text-stroke:0.15px;transform:rotate(-45deg);transform-origin:89.5px 14.8px;">04-17-2020</div>
<div class="t" style="left:1707.2px;top:1435.2px;width:89.5px;font-size:17.5px;line-height:17.5px;color:#4a4a4a;text-align:right;-webkit-text-stroke:0.15px;transform:rotate(-45deg);transform-origin:89.5px 14.8px;">04-29-2020</div>
<div class="t" style="left:1738.0px;top:1435.2px;width:89.5px;font-size:17.5px;line-height:17.5px;color:#4a4a4a;text-align:right;-webkit-text-stroke:0.15px;transform:rotate(-45deg);transform-origin:89.5px 14.8px;">05-14-2020</div>
<div class="t" style="left:1768.7px;top:1435.2px;width:89.5px;font-size:17.5px;line-height:17.5px;color:#4a4a4a;text-align:right;-webkit-text-stroke:0.15px;transform:rotate(-45deg);transform-origin:89.5px 14.8px;">06-08-2020</div>
<div class="t" style="left:1799.4px;top:1435.2px;width:89.5px;font-size:17.5px;line-height:17.5px;color:#4a4a4a;text-align:right;-webkit-text-stroke:0.15px;transform:rotate(-45deg);transform-origin:89.5px 14.8px;">07-03-2020</div>
<div class="t" style="left:1830.1px;top:1435.2px;width:89.5px;font-size:17.5px;line-height:17.5px;color:#4a4a4a;text-align:right;-webkit-text-stroke:0.15px;transform:rotate(-45deg);transform-origin:89.5px 14.8px;">07-14-2020</div>
<div class="t" style="left:1860.8px;top:1435.2px;width:89.5px;font-size:17.5px;line-height:17.5px;color:#4a4a4a;text-align:right;-webkit-text-stroke:0.15px;transform:rotate(-45deg);transform-origin:89.5px 14.8px;">08-06-2020</div>
<div class="t" style="left:1891.6px;top:1435.2px;width:89.5px;font-size:17.5px;line-height:17.5px;color:#4a4a4a;text-align:right;-webkit-text-stroke:0.15px;transform:rotate(-45deg);transform-origin:89.5px 14.8px;">09-03-2020</div>
<div class="t" style="left:1922.3px;top:1435.2px;width:89.5px;font-size:17.5px;line-height:17.5px;color:#4a4a4a;text-align:right;-webkit-text-stroke:0.15px;transform:rotate(-45deg);transform-origin:89.5px 14.8px;">09-15-2020</div>
<div class="t" style="left:1953.0px;top:1435.2px;width:89.5px;font-size:17.5px;line-height:17.5px;color:#4a4a4a;text-align:right;-webkit-text-stroke:0.15px;transform:rotate(-45deg);transform-origin:89.5px 14.8px;">09-28-2020</div>
<div class="t" style="left:1983.7px;top:1435.2px;width:89.5px;font-size:17.5px;line-height:17.5px;color:#4a4a4a;text-align:right;-webkit-text-stroke:0.15px;transform:rotate(-45deg);transform-origin:89.5px 14.8px;">10-12-2020</div>
<div class="t" style="left:2014.4px;top:1435.2px;width:89.5px;font-size:17.5px;line-height:17.5px;color:#4a4a4a;text-align:right;-webkit-text-stroke:0.15px;transform:rotate(-45deg);transform-origin:89.5px 14.8px;">10-27-2020</div>
<div class="t" style="left:2046.5px;top:1435.2px;width:88.2px;font-size:17.5px;line-height:17.5px;color:#4a4a4a;text-align:right;-webkit-text-stroke:0.15px;transform:rotate(-45deg);transform-origin:88.2px 14.8px;">11-15-2020</div>
<div class="t" style="left:2075.9px;top:1435.2px;width:89.5px;font-size:17.5px;line-height:17.5px;color:#4a4a4a;text-align:right;-webkit-text-stroke:0.15px;transform:rotate(-45deg);transform-origin:89.5px 14.8px;">12-05-2020</div>
<div class="t" style="left:2106.6px;top:1435.2px;width:89.5px;font-size:17.5px;line-height:17.5px;color:#4a4a4a;text-align:right;-webkit-text-stroke:0.15px;transform:rotate(-45deg);transform-origin:89.5px 14.8px;">12-21-2020</div>
<div class="t" style="left:2137.3px;top:1435.2px;width:89.5px;font-size:17.5px;line-height:17.5px;color:#4a4a4a;text-align:right;-webkit-text-stroke:0.15px;transform:rotate(-45deg);transform-origin:89.5px 14.8px;">01-01-2021</div>
<div class="t" style="left:1317.5px;top:1247.0px;width:167px;height:24px;font-size:21.5px;line-height:24px;font-weight:bold;color:#4a4a55;text-align:center;transform:rotate(-90deg);">Duration numeric</div>
<div class="t" style="left:2252.5px;top:1246.7px;width:176px;height:24px;font-size:20.5px;line-height:24px;font-weight:bold;color:#4a4a55;text-align:center;transform:rotate(90deg);">Number of Losses</div>
<div class="t" style="left:1839.0px;top:1556.8px;font-size:21.5px;line-height:21.5px;color:#4a4a55;font-weight:bold;letter-spacing:-0.06px;">Issue - Date</div>
<svg class="r" style="left:1655px;top:1620px" width="36" height="22" viewBox="0 0 36 22"><line x1="1" y1="11" x2="35" y2="11" stroke="#1d5a51" stroke-width="4"/><circle cx="18" cy="11" r="9" fill="#1d5a51"/></svg>
<div class="t" style="left:1697.0px;top:1620.1px;font-size:20px;line-height:20px;color:#111;letter-spacing:0.10px;">Duration numeric (sum)</div>
<div class="r" style="left:1951px;top:1620px;width:16px;height:16px;border-radius:8px;background:#f15c2e"></div>
<div class="t" style="left:1983.0px;top:1620.1px;font-size:20px;line-height:20px;color:#111;letter-spacing:-0.13px;"># of Losses</div>
<div class="r" style="left:28px;top:1302px;width:516px;height:345px;background:#fff;border:2px solid #d8d8d8;border-bottom:none;box-sizing:border-box;"></div>
<div class="r" style="left:558px;top:1302px;width:778px;height:345px;background:#fff;border:2px solid #d8d8d8;border-bottom:none;box-sizing:border-box;"></div>
<div class="t" style="left:58.4px;top:1330.3px;font-size:25px;line-height:25px;color:#111;letter-spacing:0.46px;-webkit-text-stroke:0.7px;">Loss duration by issue type</div>
<div class="t" style="left:588.4px;top:1330.8px;font-size:25px;line-height:25px;color:#111;letter-spacing:0.62px;-webkit-text-stroke:0.7px;">Loss durationby plant</div>
<svg class="r" style="left:0;top:0" width="2407" height="1707" viewBox="0 0 2407 1707"><path d="M296.7,1522.6 L296.70,1451.10 A71.5,71.5 0 0 1 368.03,1527.46 Z" fill="#7a2087" stroke="#fff" stroke-width="4.4" stroke-linejoin="round"/><path d="M296.7,1522.6 L368.03,1527.46 A71.5,71.5 0 0 1 301.31,1593.95 Z" fill="#f15c2e" stroke="#fff" stroke-width="4.4" stroke-linejoin="round"/><path d="M296.7,1522.6 L301.31,1593.95 A71.5,71.5 0 0 1 225.75,1531.44 Z" fill="#1d5a51" stroke="#fff" stroke-width="4.4" stroke-linejoin="round"/><path d="M296.7,1522.6 L225.75,1531.44 A71.5,71.5 0 0 1 296.70,1451.10 Z" fill="#2c9283" stroke="#fff" stroke-width="4.4" stroke-linejoin="round"/><path d="M946.4,1519.2 L946.40,1415.20 A104,104 0 0 1 1047.04,1545.42 Z" fill="#2c9283" stroke="#fff" stroke-width="4.4" stroke-linejoin="round"/><path d="M946.4,1519.2 L1047.04,1545.42 A104,104 0 0 1 898.38,1611.45 Z" fill="#1d5a51" stroke="#fff" stroke-width="4.4" stroke-linejoin="round"/><path d="M946.4,1519.2 L898.38,1611.45 A104,104 0 0 1 848.80,1483.29 Z" fill="#7a2087" stroke="#fff" stroke-width="4.4" stroke-linejoin="round"/><path d="M946.4,1519.2 L848.80,1483.29 A104,104 0 0 1 946.40,1415.20 Z" fill="#f15c2e" stroke="#fff" stroke-width="4.4" stroke-linejoin="round"/><path d="M220,1463 Q235,1462 242,1474" fill="none" stroke="#2c9283" stroke-width="2"/><path d="M371,1462 Q361,1463 351,1474" fill="none" stroke="#7a2087" stroke-width="2"/><path d="M231,1593 Q245,1592 251,1579" fill="none" stroke="#1d5a51" stroke-width="2"/><path d="M369,1586 Q356,1585 348,1575" fill="none" stroke="#f15c2e" stroke-width="2"/><path d="M868,1418 Q880,1420 887,1432" fill="none" stroke="#f15c2e" stroke-width="2"/><path d="M1054,1445 Q1040,1446 1031,1455" fill="none" stroke="#2c9283" stroke-width="2"/><path d="M823,1564 Q840,1563 849,1557" fill="none" stroke="#7a2087" stroke-width="2"/><path d="M1005,1632 Q995,1630 990,1617" fill="none" stroke="#1d5a51" stroke-width="2"/></svg>
<div class="t" style="left:48.7px;top:1459.0px;font-size:16.5px;line-height:16.5px;color:#555;letter-spacing:0.35px;">Testing failure:</div>
<div class="t" style="left:164.4px;top:1459.0px;font-size:16.5px;line-height:16.5px;color:#111;letter-spacing:0.83px;">27%</div>
<div class="t" style="left:48.7px;top:1589.0px;font-size:16.5px;line-height:16.5px;color:#555;letter-spacing:0.39px;">Operator error:</div>
<div class="t" style="left:167.3px;top:1589.0px;font-size:16.5px;line-height:16.5px;color:#111;letter-spacing:0.83px;">24%</div>
<div class="t" style="left:390.0px;top:1457.0px;font-size:16.5px;line-height:16.5px;color:#555;letter-spacing:0.49px;">Equipment</div>
<div class="t" style="left:390.0px;top:1479.0px;font-size:16.5px;line-height:16.5px;color:#555;letter-spacing:0.35px;">failure:</div>
<div class="t" style="left:446.0px;top:1479.0px;font-size:16.5px;line-height:16.5px;color:#111;letter-spacing:0.83px;">26%</div>
<div class="t" style="left:389.0px;top:1582.0px;font-size:16.5px;line-height:16.5px;color:#555;letter-spacing:0.40px;">Malfunction:</div>
<div class="t" style="left:486.4px;top:1582.0px;font-size:16.5px;line-height:16.5px;color:#111;letter-spacing:0.83px;">22%</div>
<div class="t" style="left:816.0px;top:1413.5px;font-size:16.5px;line-height:16.5px;color:#444;letter-spacing:0.83px;">19%</div>
<div class="t" style="left:1072.8px;top:1440.5px;font-size:16.5px;line-height:16.5px;color:#444;letter-spacing:0.83px;">29%</div>
<div class="t" style="left:770.4px;top:1559.5px;font-size:16.5px;line-height:16.5px;color:#444;letter-spacing:0.83px;">23%</div>
<div class="t" style="left:1024.5px;top:1627.5px;font-size:16.5px;line-height:16.5px;color:#444;letter-spacing:0.83px;">28%</div>
</body></html>
